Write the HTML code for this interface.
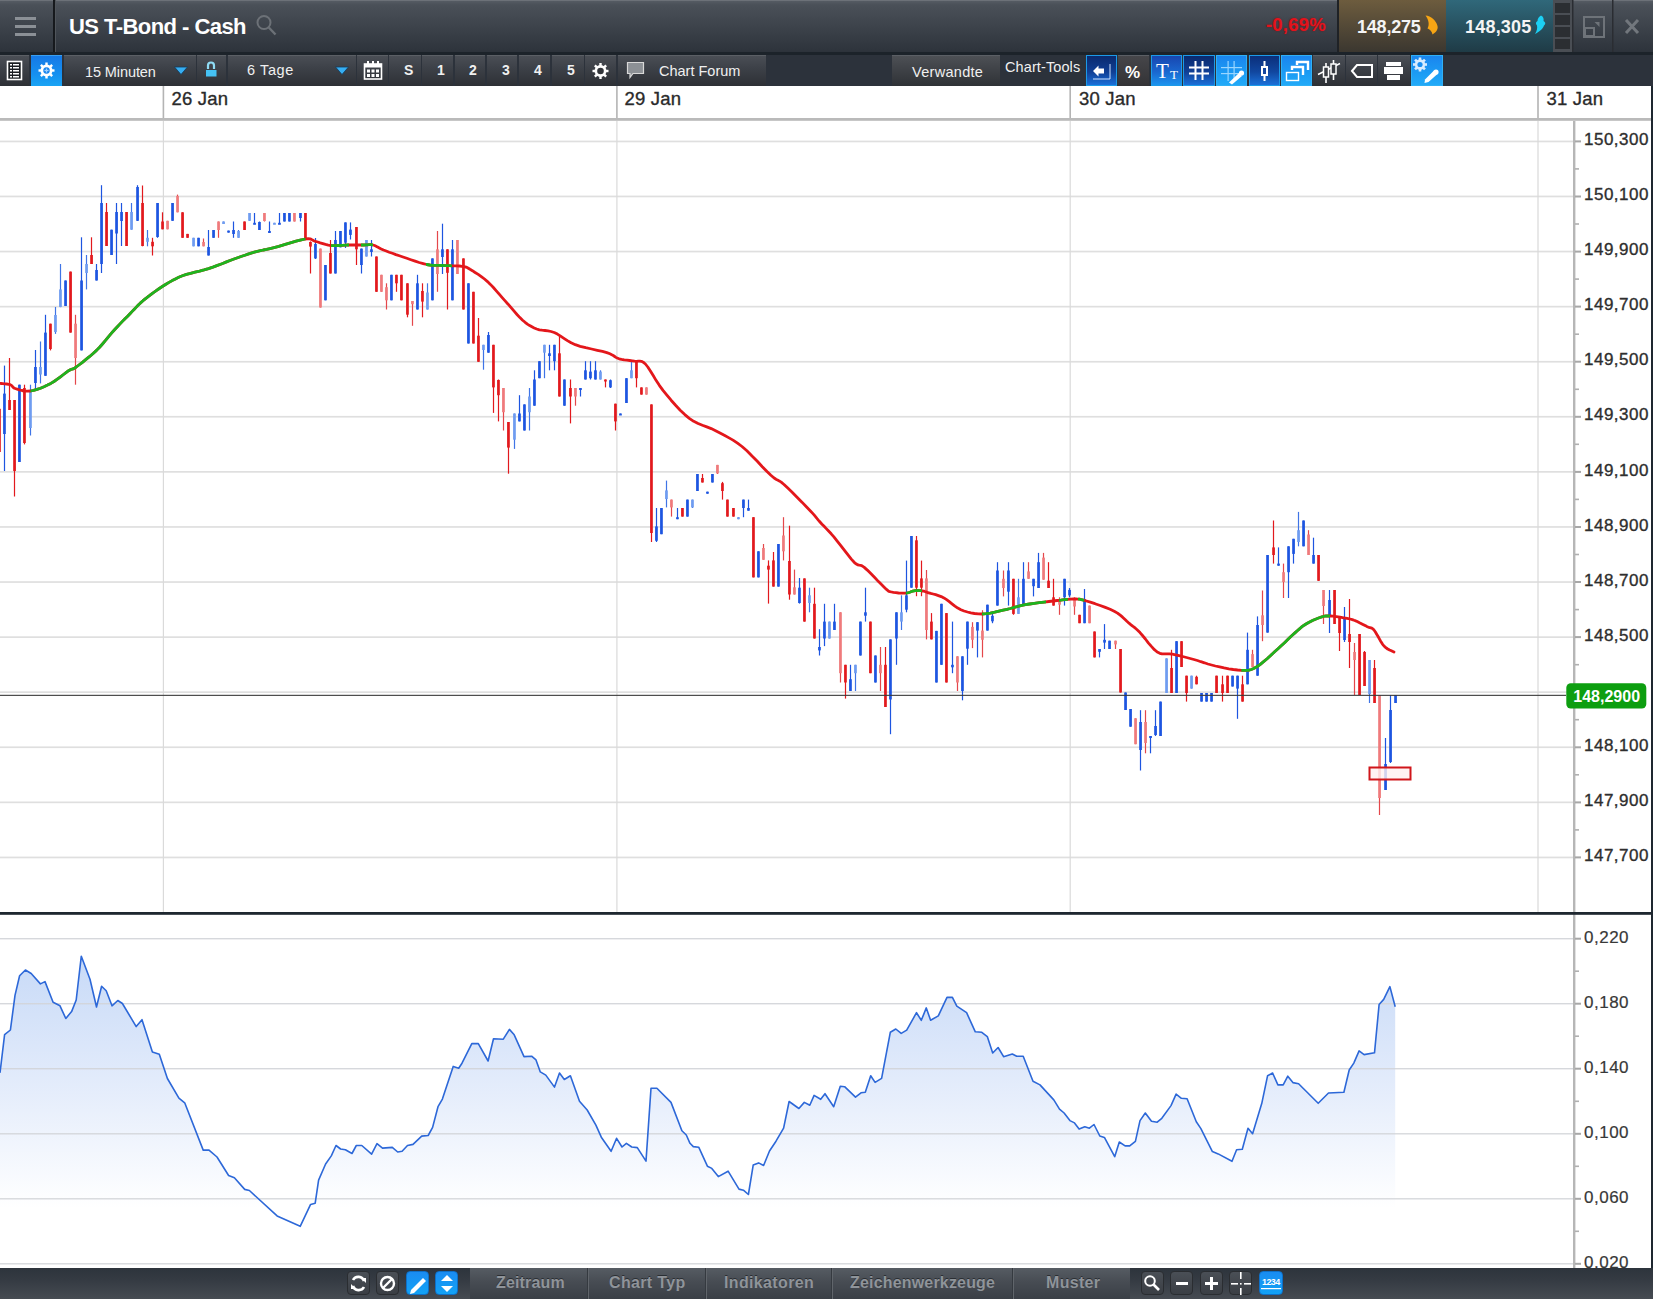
<!DOCTYPE html>
<html><head><meta charset="utf-8"><title>US T-Bond - Cash</title>
<style>
*{box-sizing:border-box}
html,body{margin:0;padding:0;width:1653px;height:1299px;overflow:hidden;background:#fff;font-family:"Liberation Sans",sans-serif}
.abs{position:absolute}
.chart{position:absolute;left:0;top:0}
.ax{font-family:"Liberation Sans",sans-serif;font-size:17px;fill:#2e2e2e;letter-spacing:0.5px;stroke:#2e2e2e;stroke-width:0.35px}
.ax2{font-family:"Liberation Sans",sans-serif;font-size:17px;fill:#383838;letter-spacing:0.5px;stroke:#383838;stroke-width:0.2px}
.dt{font-family:"Liberation Sans",sans-serif;font-size:18.5px;fill:#2a2a2a;letter-spacing:0.2px;stroke:#2a2a2a;stroke-width:0.35px}
.cp{font-family:"Liberation Sans",sans-serif;font-size:16px;font-weight:bold;fill:#fff}
#top{left:0;top:0;width:1653px;height:52px;background:linear-gradient(#555b63 0,#4a5058 8%,#3d434b 50%,#2d333b 100%);border-top:1px solid #6c7178}
#band{left:0;top:52px;width:1653px;height:3px;background:#1c232a}
#tb{left:0;top:55px;width:1653px;height:31px;background:#2c323b}
.btn{position:absolute;top:0;height:31px;background:linear-gradient(#4a4e55 0,#3d4148 40%,#2d3035 100%);border-top:1px solid #5b5f65;color:#f0f0f0;font-size:14px}
.blue{background:linear-gradient(#1679e6 0,#1590f0 60%,#1aa4f4 100%);border-top:1px solid #3aa0f0}
.navy{background:linear-gradient(#0a2a6e 0,#103f95 55%,#1a6fd8 100%);border:1px solid #1c9ae8}
.tblue{background:linear-gradient(#1846b0 0,#1a67cf 55%,#1c93ee 100%);border:1px solid #1c9ae8}
.bblue{background:linear-gradient(#1a85ee 0,#1c9cf4 60%,#22aaf8 100%);border:1px solid #30b0f5}
.sep{position:absolute;top:0;width:2px;height:31px;background:#1f2227}
.t{position:absolute;white-space:nowrap}
#bot{left:0;top:1268px;width:1653px;height:31px;background:linear-gradient(#2d343c 0,#353b43 40%,#464b52 100%)}
#tabs{position:absolute;left:470px;top:0;width:660px;height:31px;background:linear-gradient(#565c63 0,#474c53 45%,#3a3f46 100%)}
.tab{position:absolute;top:6px;font-size:16px;font-weight:bold;color:#8f949a;white-space:nowrap;text-shadow:0 -1px 0 #2a2e33}
.tsep{position:absolute;top:0;width:1px;height:31px;background:#353a40;box-shadow:1px 0 0 #60656b}
.ib{position:absolute;top:3px;width:23px;height:24px;border-radius:4px;background:linear-gradient(#4a4f56,#3a3e44);border:1px solid #2a2d31}
.ibb{background:linear-gradient(#1a8cf2,#12a2f5);border:1px solid #0e70c8}
</style></head>
<body>
<svg class="chart" width="1653" height="1299" viewBox="0 0 1653 1299" shape-rendering="auto"><rect x="0" y="140.6" width="1573" height="1.7" fill="#dfdfdf"/><rect x="0" y="195.6" width="1573" height="1.7" fill="#dfdfdf"/><rect x="0" y="250.7" width="1573" height="1.7" fill="#dfdfdf"/><rect x="0" y="305.8" width="1573" height="1.7" fill="#dfdfdf"/><rect x="0" y="360.9" width="1573" height="1.7" fill="#dfdfdf"/><rect x="0" y="415.9" width="1573" height="1.7" fill="#dfdfdf"/><rect x="0" y="471" width="1573" height="1.7" fill="#dfdfdf"/><rect x="0" y="526.1" width="1573" height="1.7" fill="#dfdfdf"/><rect x="0" y="581.2" width="1573" height="1.7" fill="#dfdfdf"/><rect x="0" y="636.3" width="1573" height="1.7" fill="#dfdfdf"/><rect x="0" y="691.3" width="1573" height="1.7" fill="#dfdfdf"/><rect x="0" y="746.4" width="1573" height="1.7" fill="#dfdfdf"/><rect x="0" y="801.5" width="1573" height="1.7" fill="#dfdfdf"/><rect x="0" y="856.6" width="1573" height="1.7" fill="#dfdfdf"/><rect x="162.8" y="121" width="1.2" height="791" fill="#dadada"/><rect x="162.6" y="86" width="1.6" height="32" fill="#b4b4b4"/><rect x="616.3" y="121" width="1.2" height="791" fill="#dadada"/><rect x="616.1" y="86" width="1.6" height="32" fill="#b4b4b4"/><rect x="1069.6" y="121" width="1.2" height="791" fill="#dadada"/><rect x="1069.4" y="86" width="1.6" height="32" fill="#b4b4b4"/><rect x="1537.4" y="121" width="1.2" height="791" fill="#dadada"/><rect x="1537.2" y="86" width="1.6" height="32" fill="#b4b4b4"/><defs><linearGradient id="ig" x1="0" y1="950" x2="0" y2="1208" gradientUnits="userSpaceOnUse"><stop offset="0" stop-color="#c6d9f7"/><stop offset="0.5" stop-color="#e2ebfb"/><stop offset="1" stop-color="#ffffff"/></linearGradient></defs><path d="M0,1268 L0,1072.8 L4.6,1034.7 L10.4,1030 L15,995.4 L19.6,975.8 L25.4,970 L31.2,973.5 L40.4,983.9 L45,981.6 L53.1,1002.3 L60,1005.8 L65.8,1018.5 L71.6,1011.6 L76.2,1000 L81.3,956.2 L90,979.3 L96.5,1007 L101.6,986.2 L106.2,990.8 L112,1005.8 L117.8,1000.5 L122.4,1003.5 L136.2,1026.6 L142,1019.7 L152.4,1052 L159.3,1054.3 L167.4,1078.5 L178.9,1098.2 L184.7,1102.8 L203.2,1150.1 L209,1150.1 L217,1157 L228.6,1175.5 L234.4,1177.8 L244.7,1189.4 L249.4,1190.5 L277.1,1215.9 L300.2,1226.3 L310.6,1204.4 L315.2,1203.2 L318.6,1180.1 L325.6,1164 L331.3,1155.9 L336,1145.5 L340.6,1149 L345.4,1149.8 L352,1153.5 L356.3,1145.5 L361.8,1145.5 L371.6,1154.2 L377,1143.7 L382.5,1148.1 L392.3,1147.4 L397.7,1152 L402.1,1151.3 L407.5,1145.5 L413,1144.4 L421.7,1136.1 L428.2,1135.5 L432.6,1127.4 L438,1106.7 L442.4,1099.1 L453.2,1066.4 L458.7,1068.2 L462,1063.2 L471.8,1043.6 L478.3,1043.6 L488.1,1061 L493.5,1038.8 L503.3,1039.2 L509.4,1029.4 L514.2,1034.8 L524,1056.6 L531.6,1056.2 L536,1059.9 L540.3,1071.9 L545.8,1075.1 L554.5,1087.1 L559.5,1073 L564.3,1079.5 L570.4,1075.8 L579.5,1101.3 L587.2,1110 L595.9,1125.2 L601.3,1137.2 L611.1,1151.3 L616.6,1138.3 L622,1147 L626.4,1143.3 L631.8,1147 L637.3,1147.6 L646,1161.1 L651,1088.2 L656.9,1088.2 L671,1102.4 L681.9,1130.7 L686.3,1135 L690,1143.3 L693.3,1146.6 L698.7,1147.2 L707.4,1166.2 L711.8,1168.4 L718.3,1176.6 L728.1,1171.2 L739,1189.1 L743.4,1190.2 L748.4,1194.5 L753.2,1165.1 L758.6,1162.9 L763.6,1165.5 L769.5,1151 L776,1141.2 L783.6,1128.1 L789.1,1101.5 L798.9,1108.5 L804.3,1102.4 L809.8,1105.2 L814.1,1095.4 L820.7,1099.3 L825,1093.7 L833.7,1106.7 L840.3,1086.3 L844.6,1086.7 L855.5,1097.2 L861,1092.8 L865.3,1092.2 L870.7,1075.8 L875.1,1082.4 L881.6,1078.4 L890.3,1032.3 L895.8,1029 L901.2,1033.4 L906.7,1030.1 L916.5,1012.7 L921.3,1020.3 L926.3,1007.9 L930.6,1020.3 L938.3,1015.9 L947,997.4 L952.4,997.4 L956.8,1006.1 L966.6,1012.7 L975.3,1031.8 L981.8,1032.3 L987.3,1036.6 L992.7,1053 L998.1,1047.5 L1003.6,1056.7 L1012.3,1054 L1016.7,1056.2 L1023.2,1056.2 L1033,1081.3 L1040,1084.9 L1053.8,1099.9 L1059.5,1109.1 L1064.1,1113 L1069.9,1120.6 L1074.5,1122.9 L1079.1,1129.1 L1084.8,1126.8 L1089.4,1128.2 L1094,1124.5 L1099.8,1136 L1104.4,1137.4 L1114.7,1156.7 L1119.3,1142 L1125.1,1145.9 L1129.7,1145.9 L1135.4,1141.3 L1140,1120.6 L1145.3,1113 L1151.5,1121.3 L1157.2,1122.2 L1161.8,1118.3 L1171,1105.6 L1176.1,1094.1 L1181.4,1098.3 L1187.1,1098.7 L1196.3,1121.7 L1200.9,1128.6 L1212.4,1151.6 L1218.2,1153.9 L1232,1161.3 L1236.6,1149.8 L1242.3,1149.3 L1248,1128.2 L1252.6,1133.7 L1261.8,1103.3 L1267.6,1075.7 L1272.6,1073 L1277.9,1084.9 L1283.2,1084.9 L1287.8,1076.2 L1292.9,1082.6 L1298.6,1083.8 L1318.2,1103.3 L1328.5,1093 L1343.9,1092.3 L1349.2,1070 L1353.8,1063.1 L1359.1,1050.9 L1364.1,1054.6 L1374.5,1052.8 L1379.1,1004.5 L1383.7,999.4 L1389.9,986.6 L1395.2,1006.8 L1395.2,1268 Z" fill="url(#ig)"/><rect x="0" y="938" width="1573" height="1.4" fill="#d2d4d8" fill-opacity="0.9"/><rect x="0" y="1003" width="1573" height="1.4" fill="#d2d4d8" fill-opacity="0.9"/><rect x="0" y="1068" width="1573" height="1.4" fill="#d2d4d8" fill-opacity="0.9"/><rect x="0" y="1133.1" width="1573" height="1.4" fill="#d2d4d8" fill-opacity="0.9"/><rect x="0" y="1198.1" width="1573" height="1.4" fill="#d2d4d8" fill-opacity="0.9"/><rect x="0" y="1263.1" width="1573" height="1.4" fill="#d2d4d8" fill-opacity="0.9"/><polyline points="0,1072.8 4.6,1034.7 10.4,1030 15,995.4 19.6,975.8 25.4,970 31.2,973.5 40.4,983.9 45,981.6 53.1,1002.3 60,1005.8 65.8,1018.5 71.6,1011.6 76.2,1000 81.3,956.2 90,979.3 96.5,1007 101.6,986.2 106.2,990.8 112,1005.8 117.8,1000.5 122.4,1003.5 136.2,1026.6 142,1019.7 152.4,1052 159.3,1054.3 167.4,1078.5 178.9,1098.2 184.7,1102.8 203.2,1150.1 209,1150.1 217,1157 228.6,1175.5 234.4,1177.8 244.7,1189.4 249.4,1190.5 277.1,1215.9 300.2,1226.3 310.6,1204.4 315.2,1203.2 318.6,1180.1 325.6,1164 331.3,1155.9 336,1145.5 340.6,1149 345.4,1149.8 352,1153.5 356.3,1145.5 361.8,1145.5 371.6,1154.2 377,1143.7 382.5,1148.1 392.3,1147.4 397.7,1152 402.1,1151.3 407.5,1145.5 413,1144.4 421.7,1136.1 428.2,1135.5 432.6,1127.4 438,1106.7 442.4,1099.1 453.2,1066.4 458.7,1068.2 462,1063.2 471.8,1043.6 478.3,1043.6 488.1,1061 493.5,1038.8 503.3,1039.2 509.4,1029.4 514.2,1034.8 524,1056.6 531.6,1056.2 536,1059.9 540.3,1071.9 545.8,1075.1 554.5,1087.1 559.5,1073 564.3,1079.5 570.4,1075.8 579.5,1101.3 587.2,1110 595.9,1125.2 601.3,1137.2 611.1,1151.3 616.6,1138.3 622,1147 626.4,1143.3 631.8,1147 637.3,1147.6 646,1161.1 651,1088.2 656.9,1088.2 671,1102.4 681.9,1130.7 686.3,1135 690,1143.3 693.3,1146.6 698.7,1147.2 707.4,1166.2 711.8,1168.4 718.3,1176.6 728.1,1171.2 739,1189.1 743.4,1190.2 748.4,1194.5 753.2,1165.1 758.6,1162.9 763.6,1165.5 769.5,1151 776,1141.2 783.6,1128.1 789.1,1101.5 798.9,1108.5 804.3,1102.4 809.8,1105.2 814.1,1095.4 820.7,1099.3 825,1093.7 833.7,1106.7 840.3,1086.3 844.6,1086.7 855.5,1097.2 861,1092.8 865.3,1092.2 870.7,1075.8 875.1,1082.4 881.6,1078.4 890.3,1032.3 895.8,1029 901.2,1033.4 906.7,1030.1 916.5,1012.7 921.3,1020.3 926.3,1007.9 930.6,1020.3 938.3,1015.9 947,997.4 952.4,997.4 956.8,1006.1 966.6,1012.7 975.3,1031.8 981.8,1032.3 987.3,1036.6 992.7,1053 998.1,1047.5 1003.6,1056.7 1012.3,1054 1016.7,1056.2 1023.2,1056.2 1033,1081.3 1040,1084.9 1053.8,1099.9 1059.5,1109.1 1064.1,1113 1069.9,1120.6 1074.5,1122.9 1079.1,1129.1 1084.8,1126.8 1089.4,1128.2 1094,1124.5 1099.8,1136 1104.4,1137.4 1114.7,1156.7 1119.3,1142 1125.1,1145.9 1129.7,1145.9 1135.4,1141.3 1140,1120.6 1145.3,1113 1151.5,1121.3 1157.2,1122.2 1161.8,1118.3 1171,1105.6 1176.1,1094.1 1181.4,1098.3 1187.1,1098.7 1196.3,1121.7 1200.9,1128.6 1212.4,1151.6 1218.2,1153.9 1232,1161.3 1236.6,1149.8 1242.3,1149.3 1248,1128.2 1252.6,1133.7 1261.8,1103.3 1267.6,1075.7 1272.6,1073 1277.9,1084.9 1283.2,1084.9 1287.8,1076.2 1292.9,1082.6 1298.6,1083.8 1318.2,1103.3 1328.5,1093 1343.9,1092.3 1349.2,1070 1353.8,1063.1 1359.1,1050.9 1364.1,1054.6 1374.5,1052.8 1379.1,1004.5 1383.7,999.4 1389.9,986.6 1395.2,1006.8" fill="none" stroke="#2d68d8" stroke-width="1.6" stroke-linejoin="round"/><rect x="-1.1" y="408.8" width="1.2" height="43.2" fill="#e2191d"/><rect x="-1.9" y="408.8" width="2.7" height="43.2" fill="#e2191d"/><rect x="3.9" y="365.6" width="1.2" height="105.4" fill="#1d55e0"/><rect x="3.1" y="393.6" width="2.7" height="40.4" fill="#1d55e0"/><rect x="8.9" y="358" width="1.2" height="52" fill="#e2191d"/><rect x="8.2" y="400" width="2.7" height="10" fill="#e2191d"/><rect x="13.9" y="400" width="1.2" height="96.5" fill="#e2191d"/><rect x="13.2" y="400" width="2.7" height="71" fill="#e2191d"/><rect x="18.9" y="384.7" width="1.2" height="77.3" fill="#1d55e0"/><rect x="18.1" y="384.7" width="2.7" height="77.3" fill="#1d55e0"/><rect x="23.9" y="384.7" width="1.2" height="59.7" fill="#e2191d"/><rect x="23.1" y="388" width="2.7" height="55" fill="#e2191d"/><rect x="29.9" y="384.7" width="1.2" height="50.8" fill="#3f74e6"/><rect x="29.1" y="391" width="2.7" height="37" fill="#6f9cf0"/><rect x="34.9" y="350" width="1.2" height="41" fill="#1d55e0"/><rect x="34.1" y="367" width="2.7" height="16" fill="#1d55e0"/><rect x="39.9" y="341.5" width="1.2" height="41.9" fill="#3f74e6"/><rect x="39.1" y="367" width="2.7" height="7.5" fill="#6f9cf0"/><rect x="44.9" y="314.8" width="1.2" height="61" fill="#1d55e0"/><rect x="44.1" y="332.6" width="2.7" height="43.2" fill="#1d55e0"/><rect x="49.9" y="323.7" width="1.2" height="26.7" fill="#e2191d"/><rect x="49.1" y="323.7" width="2.7" height="25.3" fill="#e2191d"/><rect x="54.9" y="307" width="1.2" height="26.9" fill="#3f74e6"/><rect x="54.1" y="315" width="2.7" height="17" fill="#6f9cf0"/><rect x="59.9" y="264" width="1.2" height="43.2" fill="#3f74e6"/><rect x="59.1" y="289.4" width="2.7" height="17.6" fill="#6f9cf0"/><rect x="64.9" y="280.5" width="1.2" height="25.5" fill="#1d55e0"/><rect x="64.2" y="280.5" width="2.7" height="25.5" fill="#1d55e0"/><rect x="69.9" y="271.6" width="1.2" height="61" fill="#e2191d"/><rect x="69.2" y="271.6" width="2.7" height="61" fill="#e2191d"/><rect x="74.9" y="314.8" width="1.2" height="69.9" fill="#e4474b"/><rect x="74.2" y="323.7" width="2.7" height="34.3" fill="#ef7a7c"/><rect x="80.9" y="237.3" width="1.2" height="113.1" fill="#1d55e0"/><rect x="80.2" y="280.5" width="2.7" height="69.9" fill="#1d55e0"/><rect x="85.9" y="255" width="1.2" height="34.4" fill="#3f74e6"/><rect x="85.2" y="264" width="2.7" height="9" fill="#6f9cf0"/><rect x="90.9" y="237.3" width="1.2" height="26.7" fill="#e2191d"/><rect x="90.2" y="255" width="2.7" height="9" fill="#e2191d"/><rect x="95.9" y="264" width="1.2" height="16.5" fill="#1d55e0"/><rect x="95.2" y="270" width="2.7" height="10.5" fill="#1d55e0"/><rect x="100.9" y="185.2" width="1.2" height="87.8" fill="#1d55e0"/><rect x="100.2" y="203" width="2.7" height="61" fill="#1d55e0"/><rect x="105.9" y="203" width="1.2" height="43" fill="#e2191d"/><rect x="105.2" y="212" width="2.7" height="34" fill="#e2191d"/><rect x="110.9" y="229.7" width="1.2" height="25.3" fill="#1d55e0"/><rect x="110.2" y="229.7" width="2.7" height="25.3" fill="#1d55e0"/><rect x="115.9" y="203" width="1.2" height="61" fill="#1d55e0"/><rect x="115.2" y="212" width="2.7" height="21.5" fill="#1d55e0"/><rect x="120.9" y="203" width="1.2" height="43" fill="#1d55e0"/><rect x="120.2" y="212" width="2.7" height="9" fill="#1d55e0"/><rect x="125.9" y="212" width="1.2" height="34" fill="#e2191d"/><rect x="125.2" y="212" width="2.7" height="34" fill="#e2191d"/><rect x="130.9" y="203" width="1.2" height="26.7" fill="#3f74e6"/><rect x="130.2" y="212" width="2.7" height="17.7" fill="#6f9cf0"/><rect x="136.9" y="185.2" width="1.2" height="35.8" fill="#1d55e0"/><rect x="136.2" y="187" width="2.7" height="33.8" fill="#1d55e0"/><rect x="141.9" y="185.5" width="1.2" height="60.8" fill="#e2191d"/><rect x="141.2" y="203" width="2.7" height="43" fill="#e2191d"/><rect x="146.9" y="230" width="1.2" height="16.3" fill="#3f74e6"/><rect x="146.2" y="237.8" width="2.7" height="4" fill="#6f9cf0"/><rect x="151.9" y="237.8" width="1.2" height="17.7" fill="#e2191d"/><rect x="151.2" y="241.8" width="2.7" height="4.5" fill="#e2191d"/><rect x="156.9" y="203" width="1.2" height="34.8" fill="#1d55e0"/><rect x="156.2" y="203" width="2.7" height="34" fill="#1d55e0"/><rect x="161.9" y="212.3" width="1.2" height="17" fill="#e2191d"/><rect x="161.2" y="221.5" width="2.7" height="7.8" fill="#e2191d"/><rect x="166.9" y="220.8" width="1.2" height="8.5" fill="#e4474b"/><rect x="166.2" y="220.8" width="2.7" height="8.5" fill="#ef7a7c"/><rect x="171.9" y="203" width="1.2" height="17.8" fill="#1d55e0"/><rect x="171.2" y="203" width="2.7" height="17.8" fill="#1d55e0"/><rect x="176.9" y="194.6" width="1.2" height="17.7" fill="#e4474b"/><rect x="176.2" y="196" width="2.7" height="16.3" fill="#ef7a7c"/><rect x="181.9" y="212.3" width="1.2" height="25.5" fill="#e2191d"/><rect x="181.2" y="212.3" width="2.7" height="25.5" fill="#e2191d"/><rect x="186.9" y="233.9" width="1.2" height="3.9" fill="#e2191d"/><rect x="186.2" y="233.9" width="2.7" height="3.9" fill="#e2191d"/><rect x="192.9" y="237.8" width="1.2" height="8.5" fill="#3f74e6"/><rect x="192.2" y="237.8" width="2.7" height="8.5" fill="#6f9cf0"/><rect x="197.9" y="237.8" width="1.2" height="8.5" fill="#1d55e0"/><rect x="197.2" y="237.8" width="2.7" height="8.5" fill="#1d55e0"/><rect x="202.9" y="238.5" width="1.2" height="7.8" fill="#e4474b"/><rect x="202.2" y="242" width="2.7" height="4.3" fill="#ef7a7c"/><rect x="207.9" y="230" width="1.2" height="25.5" fill="#1d55e0"/><rect x="207.2" y="247" width="2.7" height="8.5" fill="#1d55e0"/><rect x="212.9" y="230" width="1.2" height="7.8" fill="#1d55e0"/><rect x="212.2" y="230" width="2.7" height="7.8" fill="#1d55e0"/><rect x="217.9" y="221.5" width="1.2" height="16.3" fill="#e4474b"/><rect x="217.2" y="221.5" width="2.7" height="8.5" fill="#ef7a7c"/><rect x="222.9" y="221.5" width="1.2" height="2.5" fill="#3f74e6"/><rect x="222.2" y="221.5" width="2.7" height="2.5" fill="#6f9cf0"/><rect x="227.9" y="230.6" width="1.2" height="2" fill="#1d55e0"/><rect x="227.2" y="230.6" width="2.7" height="2" fill="#1d55e0"/><rect x="232.9" y="221.5" width="1.2" height="16.3" fill="#1d55e0"/><rect x="232.2" y="230" width="2.7" height="4" fill="#1d55e0"/><rect x="237.9" y="230" width="1.2" height="7.8" fill="#3f74e6"/><rect x="237.2" y="231" width="2.7" height="6.8" fill="#6f9cf0"/><rect x="243.9" y="221.5" width="1.2" height="8.5" fill="#e2191d"/><rect x="243.2" y="221.5" width="2.7" height="8.5" fill="#e2191d"/><rect x="248.9" y="213" width="1.2" height="7.8" fill="#3f74e6"/><rect x="248.2" y="213" width="2.7" height="7.8" fill="#6f9cf0"/><rect x="253.9" y="213" width="1.2" height="11" fill="#1d55e0"/><rect x="253.2" y="222.8" width="2.7" height="2" fill="#1d55e0"/><rect x="258.9" y="221.5" width="1.2" height="8.5" fill="#1d55e0"/><rect x="258.1" y="222" width="2.7" height="8" fill="#1d55e0"/><rect x="263.9" y="213" width="1.2" height="8.5" fill="#e4474b"/><rect x="263.1" y="213" width="2.7" height="8" fill="#ef7a7c"/><rect x="268.9" y="221.5" width="1.2" height="11.1" fill="#1d55e0"/><rect x="268.1" y="231" width="2.7" height="2" fill="#1d55e0"/><rect x="273.9" y="222.8" width="1.2" height="1.2" fill="#3f74e6"/><rect x="273.1" y="222.8" width="2.7" height="2" fill="#6f9cf0"/><rect x="278.9" y="213" width="1.2" height="11" fill="#1d55e0"/><rect x="278.1" y="222.8" width="2.7" height="2" fill="#1d55e0"/><rect x="283.9" y="213" width="1.2" height="8.5" fill="#1d55e0"/><rect x="283.1" y="213" width="2.7" height="8.5" fill="#1d55e0"/><rect x="288.9" y="213" width="1.2" height="8.5" fill="#1d55e0"/><rect x="288.1" y="213" width="2.7" height="8.5" fill="#1d55e0"/><rect x="293.9" y="213" width="1.2" height="8.5" fill="#e4474b"/><rect x="293.1" y="213" width="2.7" height="8.5" fill="#ef7a7c"/><rect x="299.9" y="213" width="1.2" height="8.5" fill="#1d55e0"/><rect x="299.1" y="213" width="2.7" height="5" fill="#1d55e0"/><rect x="304.9" y="213" width="1.2" height="27" fill="#e2191d"/><rect x="304.1" y="213" width="2.7" height="27" fill="#e2191d"/><rect x="309.9" y="241.4" width="1.2" height="32.1" fill="#e2191d"/><rect x="309.1" y="242" width="2.7" height="4.6" fill="#e2191d"/><rect x="314.9" y="238" width="1.2" height="21" fill="#1d55e0"/><rect x="314.1" y="244" width="2.7" height="14.4" fill="#1d55e0"/><rect x="319.9" y="248.6" width="1.2" height="58.9" fill="#e4474b"/><rect x="319.1" y="248.6" width="2.7" height="58.9" fill="#ef7a7c"/><rect x="324.9" y="265" width="1.2" height="35.3" fill="#1d55e0"/><rect x="324.1" y="265" width="2.7" height="35.3" fill="#1d55e0"/><rect x="329.9" y="240" width="1.2" height="33.5" fill="#e2191d"/><rect x="329.1" y="253" width="2.7" height="20.5" fill="#e2191d"/><rect x="334.9" y="231" width="1.2" height="42.5" fill="#1d55e0"/><rect x="334.1" y="240" width="2.7" height="33.5" fill="#1d55e0"/><rect x="339.9" y="231" width="1.2" height="16.3" fill="#1d55e0"/><rect x="339.1" y="231" width="2.7" height="16.3" fill="#1d55e0"/><rect x="344.9" y="222.4" width="1.2" height="25.6" fill="#1d55e0"/><rect x="344.1" y="222.4" width="2.7" height="20.3" fill="#1d55e0"/><rect x="349.9" y="222.4" width="1.2" height="17.1" fill="#1d55e0"/><rect x="349.1" y="229.6" width="2.7" height="5.3" fill="#1d55e0"/><rect x="355.9" y="227" width="1.2" height="38" fill="#e2191d"/><rect x="355.1" y="227" width="2.7" height="22.3" fill="#e2191d"/><rect x="360.9" y="248.6" width="1.2" height="24.9" fill="#1d55e0"/><rect x="360.1" y="248.6" width="2.7" height="16.4" fill="#1d55e0"/><rect x="365.9" y="240" width="1.2" height="16.5" fill="#3f74e6"/><rect x="365.1" y="240" width="2.7" height="16.5" fill="#6f9cf0"/><rect x="370.9" y="240" width="1.2" height="16.5" fill="#1d55e0"/><rect x="370.1" y="249.3" width="2.7" height="2.7" fill="#1d55e0"/><rect x="375.9" y="256.5" width="1.2" height="35.3" fill="#e2191d"/><rect x="375.1" y="256.5" width="2.7" height="35.3" fill="#e2191d"/><rect x="380.9" y="274.8" width="1.2" height="17" fill="#e4474b"/><rect x="380.1" y="274.8" width="2.7" height="17" fill="#ef7a7c"/><rect x="385.9" y="283.3" width="1.2" height="26.2" fill="#e4474b"/><rect x="385.1" y="287.2" width="2.7" height="13.1" fill="#ef7a7c"/><rect x="390.9" y="274.8" width="1.2" height="25.5" fill="#1d55e0"/><rect x="390.1" y="274.8" width="2.7" height="25.5" fill="#1d55e0"/><rect x="395.9" y="274.8" width="1.2" height="17" fill="#e2191d"/><rect x="395.1" y="274.8" width="2.7" height="8.5" fill="#e2191d"/><rect x="400.9" y="274.8" width="1.2" height="25.5" fill="#e2191d"/><rect x="400.1" y="274.8" width="2.7" height="25.5" fill="#e2191d"/><rect x="406.9" y="283.3" width="1.2" height="34" fill="#e2191d"/><rect x="406.1" y="283.3" width="2.7" height="31.4" fill="#e2191d"/><rect x="411.9" y="301" width="1.2" height="24.8" fill="#e4474b"/><rect x="411.1" y="301" width="2.7" height="3.2" fill="#ef7a7c"/><rect x="416.9" y="274.8" width="1.2" height="34.7" fill="#1d55e0"/><rect x="416.1" y="283.3" width="2.7" height="26.2" fill="#1d55e0"/><rect x="421.9" y="283.3" width="1.2" height="34" fill="#e2191d"/><rect x="421.1" y="291" width="2.7" height="10.6" fill="#e2191d"/><rect x="426.9" y="283.3" width="1.2" height="26.2" fill="#3f74e6"/><rect x="426.1" y="292.5" width="2.7" height="17" fill="#6f9cf0"/><rect x="431.9" y="258.4" width="1.2" height="41.9" fill="#1d55e0"/><rect x="431.1" y="258.4" width="2.7" height="41.9" fill="#1d55e0"/><rect x="436.9" y="231" width="1.2" height="60.8" fill="#e4474b"/><rect x="436.1" y="249.3" width="2.7" height="24.7" fill="#ef7a7c"/><rect x="441.9" y="223.7" width="1.2" height="50.3" fill="#1d55e0"/><rect x="441.1" y="249.3" width="2.7" height="7.7" fill="#1d55e0"/><rect x="446.9" y="249.3" width="1.2" height="60.2" fill="#e2191d"/><rect x="446.1" y="249.3" width="2.7" height="23.5" fill="#e2191d"/><rect x="451.9" y="240" width="1.2" height="60.3" fill="#1d55e0"/><rect x="451.1" y="249.3" width="2.7" height="51" fill="#1d55e0"/><rect x="456.9" y="240" width="1.2" height="34" fill="#e4474b"/><rect x="456.1" y="240" width="2.7" height="34" fill="#ef7a7c"/><rect x="462.9" y="258.4" width="1.2" height="51.1" fill="#e2191d"/><rect x="462.1" y="258.4" width="2.7" height="51.1" fill="#e2191d"/><rect x="467.9" y="283.3" width="1.2" height="60.2" fill="#1d55e0"/><rect x="467.1" y="283.3" width="2.7" height="60.2" fill="#1d55e0"/><rect x="472.9" y="291.8" width="1.2" height="51.7" fill="#e2191d"/><rect x="472.1" y="291.8" width="2.7" height="51.7" fill="#e2191d"/><rect x="477.9" y="318" width="1.2" height="43.8" fill="#e2191d"/><rect x="477.1" y="335.7" width="2.7" height="26.1" fill="#e2191d"/><rect x="482.9" y="344.8" width="1.2" height="24.9" fill="#3f74e6"/><rect x="482.1" y="344.8" width="2.7" height="5.2" fill="#6f9cf0"/><rect x="487.9" y="332" width="1.2" height="20.7" fill="#1d55e0"/><rect x="487.1" y="335" width="2.7" height="17.7" fill="#1d55e0"/><rect x="492.9" y="344.8" width="1.2" height="68.1" fill="#e2191d"/><rect x="492.1" y="344.8" width="2.7" height="42.6" fill="#e2191d"/><rect x="497.9" y="379.5" width="1.2" height="41.9" fill="#e2191d"/><rect x="497.1" y="380" width="2.7" height="15.2" fill="#e2191d"/><rect x="502.9" y="388" width="1.2" height="42.5" fill="#e4474b"/><rect x="502.1" y="388" width="2.7" height="24.2" fill="#ef7a7c"/><rect x="507.9" y="422" width="1.2" height="51.7" fill="#e2191d"/><rect x="507.1" y="422" width="2.7" height="25.6" fill="#e2191d"/><rect x="513.9" y="413.5" width="1.2" height="35.4" fill="#3f74e6"/><rect x="513.1" y="413.5" width="2.7" height="26.2" fill="#6f9cf0"/><rect x="518.9" y="395.2" width="1.2" height="26.2" fill="#1d55e0"/><rect x="518.1" y="413.5" width="2.7" height="7.9" fill="#1d55e0"/><rect x="523.9" y="404.4" width="1.2" height="26.1" fill="#1d55e0"/><rect x="523.1" y="404.4" width="2.7" height="26.1" fill="#1d55e0"/><rect x="528.9" y="388" width="1.2" height="42.5" fill="#3f74e6"/><rect x="528.1" y="396.5" width="2.7" height="15.7" fill="#6f9cf0"/><rect x="533.9" y="370.3" width="1.2" height="35.4" fill="#1d55e0"/><rect x="533.1" y="379.5" width="2.7" height="26.2" fill="#1d55e0"/><rect x="538.9" y="361.2" width="1.2" height="17" fill="#1d55e0"/><rect x="538.1" y="361.2" width="2.7" height="17" fill="#1d55e0"/><rect x="543.9" y="344.8" width="1.2" height="33.4" fill="#3f74e6"/><rect x="543.1" y="344.8" width="2.7" height="7.9" fill="#6f9cf0"/><rect x="548.9" y="344.8" width="1.2" height="25.5" fill="#1d55e0"/><rect x="548.1" y="353.3" width="2.7" height="2.7" fill="#1d55e0"/><rect x="553.9" y="344.8" width="1.2" height="25.5" fill="#1d55e0"/><rect x="553.1" y="344.8" width="2.7" height="16.4" fill="#1d55e0"/><rect x="558.9" y="335" width="1.2" height="61.5" fill="#e2191d"/><rect x="558.1" y="353.3" width="2.7" height="43.2" fill="#e2191d"/><rect x="563.9" y="379.5" width="1.2" height="26.2" fill="#1d55e0"/><rect x="563.1" y="379.5" width="2.7" height="26.2" fill="#1d55e0"/><rect x="569.9" y="379.5" width="1.2" height="43.9" fill="#e2191d"/><rect x="569.1" y="388" width="2.7" height="8.5" fill="#e2191d"/><rect x="574.9" y="388" width="1.2" height="17.7" fill="#e4474b"/><rect x="574.1" y="388" width="2.7" height="8.5" fill="#ef7a7c"/><rect x="579.9" y="388" width="1.2" height="8.5" fill="#1d55e0"/><rect x="579.1" y="388" width="2.7" height="2" fill="#1d55e0"/><rect x="584.9" y="361.2" width="1.2" height="18.3" fill="#1d55e0"/><rect x="584.1" y="370.3" width="2.7" height="9.2" fill="#1d55e0"/><rect x="589.9" y="361.2" width="1.2" height="18.3" fill="#1d55e0"/><rect x="589.1" y="371.6" width="2.7" height="6.6" fill="#1d55e0"/><rect x="594.9" y="361.2" width="1.2" height="18.3" fill="#1d55e0"/><rect x="594.1" y="370.3" width="2.7" height="9.2" fill="#1d55e0"/><rect x="599.9" y="370.3" width="1.2" height="9.2" fill="#3f74e6"/><rect x="599.1" y="371.6" width="2.7" height="7.9" fill="#6f9cf0"/><rect x="604.9" y="379.5" width="1.2" height="7.9" fill="#e2191d"/><rect x="604.1" y="379.5" width="2.7" height="2" fill="#e2191d"/><rect x="609.9" y="379.5" width="1.2" height="8.5" fill="#1d55e0"/><rect x="609.1" y="380.2" width="2.7" height="7.2" fill="#1d55e0"/><rect x="614.9" y="403.7" width="1.2" height="26.8" fill="#e2191d"/><rect x="614.1" y="403.7" width="2.7" height="17.7" fill="#e2191d"/><rect x="619.9" y="413.5" width="1.2" height="1.3" fill="#1d55e0"/><rect x="619.1" y="413.5" width="2.7" height="2" fill="#1d55e0"/><rect x="625.9" y="378.2" width="1.2" height="24.8" fill="#1d55e0"/><rect x="625.1" y="378.2" width="2.7" height="24.8" fill="#1d55e0"/><rect x="630.9" y="361.2" width="1.2" height="17" fill="#3f74e6"/><rect x="630.1" y="370.3" width="2.7" height="7.9" fill="#6f9cf0"/><rect x="635.9" y="361.2" width="1.2" height="26.2" fill="#e2191d"/><rect x="635.1" y="361.2" width="2.7" height="17" fill="#e2191d"/><rect x="640.9" y="387.4" width="1.2" height="7.2" fill="#e2191d"/><rect x="640.1" y="387.4" width="2.7" height="7.2" fill="#e2191d"/><rect x="645.9" y="387.4" width="1.2" height="7.2" fill="#e4474b"/><rect x="645.1" y="387.4" width="2.7" height="7.2" fill="#ef7a7c"/><rect x="650.9" y="404.4" width="1.2" height="137.6" fill="#e2191d"/><rect x="650.1" y="404.4" width="2.7" height="128.6" fill="#e2191d"/><rect x="655.9" y="508" width="1.2" height="34" fill="#1d55e0"/><rect x="655.1" y="526.4" width="2.7" height="14.4" fill="#1d55e0"/><rect x="660.9" y="508" width="1.2" height="26.2" fill="#1d55e0"/><rect x="660.1" y="508" width="2.7" height="26.2" fill="#1d55e0"/><rect x="665.9" y="480.6" width="1.2" height="26.8" fill="#3f74e6"/><rect x="665.1" y="490.4" width="2.7" height="8.6" fill="#6f9cf0"/><rect x="670.9" y="499.6" width="1.2" height="17" fill="#e4474b"/><rect x="670.1" y="499.6" width="2.7" height="7.8" fill="#ef7a7c"/><rect x="676.9" y="508" width="1.2" height="11.2" fill="#1d55e0"/><rect x="676.1" y="517.2" width="2.7" height="2" fill="#1d55e0"/><rect x="681.9" y="508" width="1.2" height="8.6" fill="#e2191d"/><rect x="681.1" y="508" width="2.7" height="8.6" fill="#e2191d"/><rect x="686.9" y="499.6" width="1.2" height="17" fill="#1d55e0"/><rect x="686.1" y="499.6" width="2.7" height="17" fill="#1d55e0"/><rect x="691.9" y="499.6" width="1.2" height="8.4" fill="#3f74e6"/><rect x="691.1" y="499.6" width="2.7" height="7.8" fill="#6f9cf0"/><rect x="696.9" y="474" width="1.2" height="17" fill="#1d55e0"/><rect x="696.1" y="474" width="2.7" height="17" fill="#1d55e0"/><rect x="701.9" y="474" width="1.2" height="8.5" fill="#e2191d"/><rect x="701.1" y="478" width="2.7" height="4.5" fill="#e2191d"/><rect x="706.9" y="491.7" width="1.2" height="2" fill="#1d55e0"/><rect x="706.1" y="491.7" width="2.7" height="2" fill="#1d55e0"/><rect x="711.9" y="474" width="1.2" height="8.5" fill="#1d55e0"/><rect x="711.1" y="474" width="2.7" height="8.5" fill="#1d55e0"/><rect x="716.9" y="464.9" width="1.2" height="9.1" fill="#e4474b"/><rect x="716.1" y="464.9" width="2.7" height="8.5" fill="#ef7a7c"/><rect x="721.9" y="481.9" width="1.2" height="17.7" fill="#e2191d"/><rect x="721.1" y="483.2" width="2.7" height="7.8" fill="#e2191d"/><rect x="726.9" y="499.6" width="1.2" height="17" fill="#e2191d"/><rect x="726.1" y="499.6" width="2.7" height="17" fill="#e2191d"/><rect x="732.9" y="508" width="1.2" height="8.6" fill="#e2191d"/><rect x="732.1" y="508" width="2.7" height="8.6" fill="#e2191d"/><rect x="737.9" y="517.2" width="1.2" height="2" fill="#3f74e6"/><rect x="737.1" y="517.2" width="2.7" height="2" fill="#6f9cf0"/><rect x="742.9" y="499.6" width="1.2" height="17.6" fill="#1d55e0"/><rect x="742.1" y="499.6" width="2.7" height="8.4" fill="#1d55e0"/><rect x="747.9" y="499.6" width="1.2" height="11.1" fill="#1d55e0"/><rect x="747.1" y="508" width="2.7" height="2.7" fill="#1d55e0"/><rect x="752.9" y="517.2" width="1.2" height="60.2" fill="#e2191d"/><rect x="752.1" y="517.2" width="2.7" height="60.2" fill="#e2191d"/><rect x="757.9" y="551.3" width="1.2" height="26.1" fill="#1d55e0"/><rect x="757.1" y="551.3" width="2.7" height="26.1" fill="#1d55e0"/><rect x="762.9" y="544" width="1.2" height="15.8" fill="#e4474b"/><rect x="762.1" y="548" width="2.7" height="11.8" fill="#ef7a7c"/><rect x="767.9" y="560.4" width="1.2" height="43.2" fill="#e2191d"/><rect x="767.1" y="565.7" width="2.7" height="3.9" fill="#e2191d"/><rect x="772.9" y="552" width="1.2" height="34.6" fill="#e2191d"/><rect x="772.1" y="560.4" width="2.7" height="26.2" fill="#e2191d"/><rect x="777.9" y="544" width="1.2" height="42.6" fill="#1d55e0"/><rect x="777.1" y="544" width="2.7" height="42.6" fill="#1d55e0"/><rect x="782.9" y="517.2" width="1.2" height="43.2" fill="#e4474b"/><rect x="782.1" y="535.5" width="2.7" height="15.8" fill="#ef7a7c"/><rect x="788.9" y="525.7" width="1.2" height="74" fill="#e2191d"/><rect x="788.1" y="561" width="2.7" height="33.5" fill="#e2191d"/><rect x="793.9" y="569.6" width="1.2" height="24.9" fill="#e4474b"/><rect x="793.1" y="587.3" width="2.7" height="7.2" fill="#ef7a7c"/><rect x="798.9" y="578" width="1.2" height="25.6" fill="#1d55e0"/><rect x="798.1" y="587.7" width="2.7" height="15.3" fill="#1d55e0"/><rect x="803.9" y="578.4" width="1.2" height="43.2" fill="#e2191d"/><rect x="803.1" y="578.4" width="2.7" height="43.2" fill="#e2191d"/><rect x="808.9" y="587.7" width="1.2" height="24.6" fill="#3f74e6"/><rect x="808.1" y="595.3" width="2.7" height="7.7" fill="#6f9cf0"/><rect x="813.9" y="587.7" width="1.2" height="50.8" fill="#e2191d"/><rect x="813.1" y="603.8" width="2.7" height="34.7" fill="#e2191d"/><rect x="818.9" y="629.2" width="1.2" height="26.3" fill="#1d55e0"/><rect x="818.1" y="647" width="2.7" height="3.4" fill="#1d55e0"/><rect x="823.9" y="603.8" width="1.2" height="42.3" fill="#1d55e0"/><rect x="823.1" y="621.6" width="2.7" height="16.9" fill="#1d55e0"/><rect x="828.9" y="621.6" width="1.2" height="16.9" fill="#3f74e6"/><rect x="828.1" y="621.6" width="2.7" height="16.9" fill="#6f9cf0"/><rect x="833.9" y="603.8" width="1.2" height="26.2" fill="#1d55e0"/><rect x="833.1" y="621.6" width="2.7" height="8.4" fill="#1d55e0"/><rect x="839.9" y="612.3" width="1.2" height="70.2" fill="#e4474b"/><rect x="839.1" y="612.3" width="2.7" height="60.9" fill="#ef7a7c"/><rect x="844.9" y="664.8" width="1.2" height="33.8" fill="#e2191d"/><rect x="844.1" y="664.8" width="2.7" height="17.7" fill="#e2191d"/><rect x="849.9" y="664.8" width="1.2" height="26.2" fill="#1d55e0"/><rect x="849.1" y="679.2" width="2.7" height="11.8" fill="#1d55e0"/><rect x="854.9" y="664.8" width="1.2" height="26.2" fill="#3f74e6"/><rect x="854.1" y="664.8" width="2.7" height="8.4" fill="#6f9cf0"/><rect x="859.9" y="621.6" width="1.2" height="33.9" fill="#1d55e0"/><rect x="859.1" y="621.6" width="2.7" height="33.9" fill="#1d55e0"/><rect x="864.9" y="587.7" width="1.2" height="33.9" fill="#1d55e0"/><rect x="864.1" y="612.3" width="2.7" height="3.4" fill="#1d55e0"/><rect x="869.9" y="621.6" width="1.2" height="51.6" fill="#e2191d"/><rect x="869.1" y="621.6" width="2.7" height="51.6" fill="#e2191d"/><rect x="874.9" y="655.5" width="1.2" height="27" fill="#1d55e0"/><rect x="874.1" y="655.5" width="2.7" height="27" fill="#1d55e0"/><rect x="879.9" y="647" width="1.2" height="44" fill="#e4474b"/><rect x="879.1" y="664.8" width="2.7" height="8.4" fill="#ef7a7c"/><rect x="884.9" y="647" width="1.2" height="60" fill="#e2191d"/><rect x="884.1" y="664.8" width="2.7" height="42.2" fill="#e2191d"/><rect x="889.9" y="639.4" width="1.2" height="94.8" fill="#1d55e0"/><rect x="889.1" y="639.4" width="2.7" height="60.1" fill="#1d55e0"/><rect x="895.9" y="612.3" width="1.2" height="52.5" fill="#1d55e0"/><rect x="895.1" y="612.3" width="2.7" height="26.2" fill="#1d55e0"/><rect x="900.9" y="595.3" width="1.2" height="34.7" fill="#3f74e6"/><rect x="900.1" y="612.3" width="2.7" height="9.3" fill="#6f9cf0"/><rect x="905.9" y="560.6" width="1.2" height="51.7" fill="#1d55e0"/><rect x="905.1" y="595.3" width="2.7" height="14.4" fill="#1d55e0"/><rect x="910.9" y="536" width="1.2" height="51.7" fill="#1d55e0"/><rect x="910.1" y="536" width="2.7" height="51.7" fill="#1d55e0"/><rect x="915.9" y="536" width="1.2" height="60.2" fill="#e2191d"/><rect x="915.1" y="540.3" width="2.7" height="47.4" fill="#e2191d"/><rect x="920.9" y="560.6" width="1.2" height="35.6" fill="#e2191d"/><rect x="920.1" y="578.4" width="2.7" height="9.3" fill="#e2191d"/><rect x="925.9" y="570" width="1.2" height="69.4" fill="#e4474b"/><rect x="925.1" y="578.4" width="2.7" height="51.6" fill="#ef7a7c"/><rect x="930.9" y="613.1" width="1.2" height="26.3" fill="#e2191d"/><rect x="930.1" y="621.6" width="2.7" height="17.8" fill="#e2191d"/><rect x="935.9" y="630.9" width="1.2" height="51.6" fill="#1d55e0"/><rect x="935.1" y="630.9" width="2.7" height="51.6" fill="#1d55e0"/><rect x="940.9" y="603.8" width="1.2" height="61" fill="#1d55e0"/><rect x="940.1" y="603.8" width="2.7" height="61" fill="#1d55e0"/><rect x="945.9" y="613.1" width="1.2" height="69.4" fill="#e2191d"/><rect x="945.1" y="613.1" width="2.7" height="69.4" fill="#e2191d"/><rect x="951.9" y="621.6" width="1.2" height="51.6" fill="#1d55e0"/><rect x="951.1" y="664.8" width="2.7" height="2.5" fill="#1d55e0"/><rect x="956.9" y="656.3" width="1.2" height="34.7" fill="#e4474b"/><rect x="956.1" y="656.3" width="2.7" height="26.2" fill="#ef7a7c"/><rect x="961.9" y="656.3" width="1.2" height="44" fill="#1d55e0"/><rect x="961.1" y="656.3" width="2.7" height="34.7" fill="#1d55e0"/><rect x="966.9" y="621.6" width="1.2" height="43.2" fill="#1d55e0"/><rect x="966.1" y="621.6" width="2.7" height="27.1" fill="#1d55e0"/><rect x="971.9" y="622.2" width="1.2" height="25.9" fill="#e4474b"/><rect x="971.1" y="626.9" width="2.7" height="12.9" fill="#ef7a7c"/><rect x="976.9" y="622.2" width="1.2" height="35.2" fill="#1d55e0"/><rect x="976.1" y="622.2" width="2.7" height="8.4" fill="#1d55e0"/><rect x="981.9" y="610.2" width="1.2" height="47.2" fill="#e4474b"/><rect x="981.1" y="630.6" width="2.7" height="9.2" fill="#ef7a7c"/><rect x="986.9" y="604.7" width="1.2" height="25.9" fill="#1d55e0"/><rect x="986.1" y="604.7" width="2.7" height="25.9" fill="#1d55e0"/><rect x="991.9" y="613" width="1.2" height="10.2" fill="#1d55e0"/><rect x="991.1" y="615.8" width="2.7" height="5.5" fill="#1d55e0"/><rect x="996.9" y="562.2" width="1.2" height="43.4" fill="#1d55e0"/><rect x="996.1" y="570.5" width="2.7" height="35.1" fill="#1d55e0"/><rect x="1002.9" y="570.5" width="1.2" height="25.9" fill="#e4474b"/><rect x="1002.1" y="578.8" width="2.7" height="9.2" fill="#ef7a7c"/><rect x="1007.9" y="562.2" width="1.2" height="43.4" fill="#1d55e0"/><rect x="1007.1" y="570.5" width="2.7" height="21.2" fill="#1d55e0"/><rect x="1012.9" y="578.8" width="1.2" height="36" fill="#e2191d"/><rect x="1012.1" y="578.8" width="2.7" height="35.1" fill="#e2191d"/><rect x="1017.9" y="578.8" width="1.2" height="35.1" fill="#3f74e6"/><rect x="1017.1" y="597.3" width="2.7" height="16.6" fill="#6f9cf0"/><rect x="1022.9" y="562.2" width="1.2" height="43.4" fill="#1d55e0"/><rect x="1022.1" y="578.8" width="2.7" height="26.8" fill="#1d55e0"/><rect x="1027.9" y="562.2" width="1.2" height="16.6" fill="#e4474b"/><rect x="1027.2" y="571.4" width="2.7" height="7.4" fill="#ef7a7c"/><rect x="1032.9" y="578.8" width="1.2" height="17.6" fill="#1d55e0"/><rect x="1032.2" y="578.8" width="2.7" height="7.4" fill="#1d55e0"/><rect x="1037.9" y="552.9" width="1.2" height="35.1" fill="#1d55e0"/><rect x="1037.2" y="562.2" width="2.7" height="25.8" fill="#1d55e0"/><rect x="1042.9" y="552.9" width="1.2" height="26.8" fill="#e4474b"/><rect x="1042.2" y="557.6" width="2.7" height="22.1" fill="#ef7a7c"/><rect x="1047.9" y="562.2" width="1.2" height="25.8" fill="#e2191d"/><rect x="1047.2" y="580.7" width="2.7" height="7.3" fill="#e2191d"/><rect x="1052.9" y="578.8" width="1.2" height="26.8" fill="#e2191d"/><rect x="1052.2" y="597.3" width="2.7" height="8.3" fill="#e2191d"/><rect x="1058.9" y="597.3" width="1.2" height="17.5" fill="#e4474b"/><rect x="1058.2" y="599.1" width="2.7" height="5.6" fill="#ef7a7c"/><rect x="1063.9" y="578.8" width="1.2" height="26.8" fill="#1d55e0"/><rect x="1063.2" y="578.8" width="2.7" height="18.5" fill="#1d55e0"/><rect x="1068.9" y="588" width="1.2" height="9.3" fill="#1d55e0"/><rect x="1068.2" y="589.9" width="2.7" height="5.5" fill="#1d55e0"/><rect x="1073.9" y="597.3" width="1.2" height="17.5" fill="#e4474b"/><rect x="1073.2" y="599.1" width="2.7" height="7.4" fill="#ef7a7c"/><rect x="1078.9" y="614.8" width="1.2" height="8.4" fill="#e2191d"/><rect x="1078.2" y="614.8" width="2.7" height="8.4" fill="#e2191d"/><rect x="1083.9" y="589" width="1.2" height="34.2" fill="#1d55e0"/><rect x="1083.2" y="599.1" width="2.7" height="24.1" fill="#1d55e0"/><rect x="1088.9" y="605.6" width="1.2" height="17.6" fill="#e4474b"/><rect x="1088.2" y="605.6" width="2.7" height="17.6" fill="#ef7a7c"/><rect x="1093.9" y="631.5" width="1.2" height="25.9" fill="#e2191d"/><rect x="1093.2" y="631.5" width="2.7" height="25.9" fill="#e2191d"/><rect x="1098.9" y="649" width="1.2" height="8.4" fill="#1d55e0"/><rect x="1098.2" y="649" width="2.7" height="2.8" fill="#1d55e0"/><rect x="1103.9" y="624.1" width="1.2" height="24.9" fill="#1d55e0"/><rect x="1103.2" y="639.8" width="2.7" height="2.8" fill="#1d55e0"/><rect x="1108.9" y="640.7" width="1.2" height="8.3" fill="#1d55e0"/><rect x="1108.2" y="640.7" width="2.7" height="8.3" fill="#1d55e0"/><rect x="1114.9" y="640.7" width="1.2" height="8.3" fill="#e4474b"/><rect x="1114.2" y="640.7" width="2.7" height="3.7" fill="#ef7a7c"/><rect x="1119.9" y="649" width="1.2" height="43.5" fill="#e2191d"/><rect x="1119.2" y="649" width="2.7" height="43.5" fill="#e2191d"/><rect x="1124.9" y="692.5" width="1.2" height="17.5" fill="#1d55e0"/><rect x="1124.2" y="692.5" width="2.7" height="17.5" fill="#1d55e0"/><rect x="1129.9" y="709" width="1.2" height="17.7" fill="#1d55e0"/><rect x="1129.2" y="709" width="2.7" height="17.7" fill="#1d55e0"/><rect x="1134.9" y="718.3" width="1.2" height="25.9" fill="#e4474b"/><rect x="1134.2" y="718.3" width="2.7" height="25.9" fill="#ef7a7c"/><rect x="1139.9" y="710.2" width="1.2" height="60.3" fill="#1d55e0"/><rect x="1139.2" y="722" width="2.7" height="28" fill="#1d55e0"/><rect x="1144.9" y="710.2" width="1.2" height="43.1" fill="#e4474b"/><rect x="1144.2" y="722" width="2.7" height="21" fill="#ef7a7c"/><rect x="1149.9" y="736" width="1.2" height="17.3" fill="#1d55e0"/><rect x="1149.2" y="736" width="2.7" height="2" fill="#1d55e0"/><rect x="1154.9" y="710.2" width="1.2" height="25.8" fill="#1d55e0"/><rect x="1154.2" y="726" width="2.7" height="9" fill="#1d55e0"/><rect x="1159.9" y="701.6" width="1.2" height="34.4" fill="#1d55e0"/><rect x="1159.2" y="701.6" width="2.7" height="34.4" fill="#1d55e0"/><rect x="1165.9" y="658.4" width="1.2" height="34.6" fill="#3f74e6"/><rect x="1165.2" y="658.4" width="2.7" height="34.6" fill="#6f9cf0"/><rect x="1170.9" y="649.8" width="1.2" height="43.2" fill="#e2191d"/><rect x="1170.2" y="668" width="2.7" height="25" fill="#e2191d"/><rect x="1175.9" y="641.2" width="1.2" height="51.8" fill="#1d55e0"/><rect x="1175.2" y="641.2" width="2.7" height="51.8" fill="#1d55e0"/><rect x="1180.9" y="641.2" width="1.2" height="25.8" fill="#e2191d"/><rect x="1180.2" y="641.2" width="2.7" height="25.8" fill="#e2191d"/><rect x="1185.9" y="675.7" width="1.2" height="25.9" fill="#e2191d"/><rect x="1185.2" y="675.7" width="2.7" height="17.3" fill="#e2191d"/><rect x="1190.9" y="675.7" width="1.2" height="12.9" fill="#3f74e6"/><rect x="1190.2" y="675.7" width="2.7" height="12.9" fill="#6f9cf0"/><rect x="1195.9" y="675.7" width="1.2" height="8.6" fill="#e2191d"/><rect x="1195.2" y="676.8" width="2.7" height="7.5" fill="#e2191d"/><rect x="1200.9" y="693" width="1.2" height="8.6" fill="#1d55e0"/><rect x="1200.2" y="693" width="2.7" height="8.6" fill="#1d55e0"/><rect x="1205.9" y="693" width="1.2" height="8.6" fill="#1d55e0"/><rect x="1205.2" y="693" width="2.7" height="8.6" fill="#1d55e0"/><rect x="1210.9" y="693" width="1.2" height="8.6" fill="#1d55e0"/><rect x="1210.2" y="693" width="2.7" height="8.6" fill="#1d55e0"/><rect x="1215.9" y="675.7" width="1.2" height="17.3" fill="#e2191d"/><rect x="1215.2" y="675.7" width="2.7" height="17.3" fill="#e2191d"/><rect x="1221.9" y="675.7" width="1.2" height="25.9" fill="#e2191d"/><rect x="1221.2" y="684.3" width="2.7" height="8.7" fill="#e2191d"/><rect x="1226.9" y="675.7" width="1.2" height="17.3" fill="#e2191d"/><rect x="1226.2" y="675.7" width="2.7" height="17.3" fill="#e2191d"/><rect x="1231.9" y="675.7" width="1.2" height="10.8" fill="#1d55e0"/><rect x="1231.2" y="675.7" width="2.7" height="10.8" fill="#1d55e0"/><rect x="1236.9" y="675.7" width="1.2" height="43.1" fill="#1d55e0"/><rect x="1236.2" y="675.7" width="2.7" height="12.9" fill="#1d55e0"/><rect x="1241.9" y="675.7" width="1.2" height="25.9" fill="#e2191d"/><rect x="1241.2" y="684.3" width="2.7" height="17.3" fill="#e2191d"/><rect x="1246.9" y="632.6" width="1.2" height="51.7" fill="#1d55e0"/><rect x="1246.2" y="649.8" width="2.7" height="34.5" fill="#1d55e0"/><rect x="1251.9" y="649.8" width="1.2" height="17.2" fill="#e4474b"/><rect x="1251.2" y="654.1" width="2.7" height="12.9" fill="#ef7a7c"/><rect x="1256.9" y="616.4" width="1.2" height="59.3" fill="#1d55e0"/><rect x="1256.2" y="625" width="2.7" height="50.7" fill="#1d55e0"/><rect x="1261.9" y="590.5" width="1.2" height="50.7" fill="#e4474b"/><rect x="1261.2" y="615.3" width="2.7" height="9.7" fill="#ef7a7c"/><rect x="1266.9" y="555" width="1.2" height="77.6" fill="#1d55e0"/><rect x="1266.2" y="555" width="2.7" height="77.6" fill="#1d55e0"/><rect x="1272.9" y="520.5" width="1.2" height="43.1" fill="#e2191d"/><rect x="1272.2" y="547.4" width="2.7" height="7.6" fill="#e2191d"/><rect x="1277.9" y="547.4" width="1.2" height="18.3" fill="#1d55e0"/><rect x="1277.2" y="563.6" width="2.7" height="2.1" fill="#1d55e0"/><rect x="1282.9" y="563.6" width="1.2" height="34.4" fill="#e4474b"/><rect x="1282.2" y="572.2" width="2.7" height="9.8" fill="#ef7a7c"/><rect x="1287.9" y="546.3" width="1.2" height="51.7" fill="#1d55e0"/><rect x="1287.2" y="546.3" width="2.7" height="25.9" fill="#1d55e0"/><rect x="1292.9" y="538.8" width="1.2" height="24.8" fill="#1d55e0"/><rect x="1292.2" y="538.8" width="2.7" height="15.1" fill="#1d55e0"/><rect x="1297.9" y="511.9" width="1.2" height="34.4" fill="#3f74e6"/><rect x="1297.2" y="530.2" width="2.7" height="11.8" fill="#6f9cf0"/><rect x="1302.9" y="520.5" width="1.2" height="25.8" fill="#1d55e0"/><rect x="1302.2" y="520.5" width="2.7" height="25.8" fill="#1d55e0"/><rect x="1307.9" y="530.2" width="1.2" height="24.8" fill="#e4474b"/><rect x="1307.2" y="534.5" width="2.7" height="20.5" fill="#ef7a7c"/><rect x="1312.9" y="537.7" width="1.2" height="25.9" fill="#1d55e0"/><rect x="1312.2" y="555" width="2.7" height="8.6" fill="#1d55e0"/><rect x="1317.9" y="555" width="1.2" height="25.8" fill="#e2191d"/><rect x="1317.2" y="555" width="2.7" height="25.8" fill="#e2191d"/><rect x="1322.9" y="590" width="1.2" height="34" fill="#e4474b"/><rect x="1322.2" y="590" width="2.7" height="16" fill="#ef7a7c"/><rect x="1328.9" y="590" width="1.2" height="43" fill="#1d55e0"/><rect x="1328.2" y="600" width="2.7" height="15" fill="#1d55e0"/><rect x="1333.9" y="590" width="1.2" height="34" fill="#e2191d"/><rect x="1333.2" y="590" width="2.7" height="34" fill="#e2191d"/><rect x="1338.9" y="617" width="1.2" height="34" fill="#e2191d"/><rect x="1338.2" y="617" width="2.7" height="16" fill="#e2191d"/><rect x="1343.9" y="607" width="1.2" height="35" fill="#1d55e0"/><rect x="1343.2" y="617" width="2.7" height="23" fill="#1d55e0"/><rect x="1348.9" y="599" width="1.2" height="69" fill="#e2191d"/><rect x="1348.2" y="634" width="2.7" height="8" fill="#e2191d"/><rect x="1353.9" y="643" width="1.2" height="52" fill="#e4474b"/><rect x="1353.2" y="652" width="2.7" height="8" fill="#ef7a7c"/><rect x="1358.9" y="634" width="1.2" height="61" fill="#e2191d"/><rect x="1358.2" y="634" width="2.7" height="61" fill="#e2191d"/><rect x="1363.9" y="651" width="1.2" height="35" fill="#e2191d"/><rect x="1363.2" y="652" width="2.7" height="34" fill="#e2191d"/><rect x="1368.9" y="660" width="1.2" height="43" fill="#3f74e6"/><rect x="1368.2" y="660" width="2.7" height="34" fill="#6f9cf0"/><rect x="1373.9" y="660" width="1.2" height="43" fill="#e2191d"/><rect x="1373.2" y="668" width="2.7" height="35" fill="#e2191d"/><rect x="1378.9" y="695" width="1.2" height="120" fill="#e4474b"/><rect x="1378.2" y="695" width="2.7" height="103" fill="#ef7a7c"/><rect x="1384.9" y="738" width="1.2" height="52" fill="#1d55e0"/><rect x="1384.2" y="764" width="2.7" height="26" fill="#1d55e0"/><rect x="1389.9" y="695" width="1.2" height="68" fill="#1d55e0"/><rect x="1389.2" y="710" width="2.7" height="52" fill="#1d55e0"/><rect x="1394.9" y="695" width="1.2" height="8" fill="#1d55e0"/><rect x="1394.2" y="695" width="2.7" height="8" fill="#1d55e0"/><defs><clipPath id="gc"><rect x="30.5" y="0" width="274.9" height="912"/><rect x="331" y="0" width="18" height="912"/><rect x="361" y="0" width="12" height="912"/><rect x="426" y="0" width="26" height="912"/><rect x="905.8" y="0" width="16.1" height="912"/><rect x="982" y="0" width="64" height="912"/><rect x="1059" y="0" width="9" height="912"/><rect x="1078" y="0" width="6.3" height="912"/><rect x="1241.3" y="0" width="88.7" height="912"/></clipPath></defs><polyline points="0,383.4 1.2,383.5 2.8,383.6 4.8,383.8 6.8,384 8.7,384.3 10.2,384.7 11.2,385.2 11.9,385.8 12.4,386.5 13,387.2 13.8,387.9 15.2,388.5 17.1,389.1 19.4,389.8 21.9,390.5 24.6,391 27.5,391.2 30.5,391 33.6,390.4 37,389.4 40.5,388.2 44,386.7 47.5,385.1 50.8,383.4 54,381.5 57.3,379.2 60.5,376.8 63.5,374.5 66.3,372.4 68.6,370.7 70.3,369.7 71.4,369.3 72.2,369.1 73.1,368.9 74.3,368.3 76.2,367 78.9,365 82.1,362.6 85.7,359.7 89.4,356.7 93.1,353.5 96.5,350.4 99.6,347.2 102.7,343.7 105.7,340.2 108.6,336.6 111.5,333.2 114.3,330 117.1,327 119.8,324.1 122.4,321.4 125,318.7 127.6,316.2 130,313.7 132.2,311.4 134.3,309.2 136.3,307.1 138.3,305 140.5,302.9 143,300.7 145.9,298.3 149.1,295.9 152.4,293.3 155.9,290.9 159.3,288.5 162.7,286.3 165.9,284.3 169,282.4 172.2,280.6 175.4,278.9 178.7,277.3 182.4,275.8 186.4,274.4 190.6,273.3 195,272.2 199.6,271.1 204.1,269.9 208.5,268.6 212.9,267.1 217.5,265.4 222,263.7 226.5,261.9 230.7,260.3 234.7,258.8 238.3,257.5 241.7,256.3 244.9,255.2 248,254.1 251.1,253.1 254.3,252.2 257.4,251.4 260.4,250.7 263.4,250 266.6,249.4 270,248.6 274,247.6 278.8,246.3 284.4,244.6 290.3,242.9 296.1,241.2 301.3,239.8 305.4,239 308.3,238.7 310.1,238.9 311.4,239.4 312.5,240.1 313.8,240.8 315.5,241.4 317.8,242 320.2,242.8 322.8,243.6 325.5,244.4 328.3,245.1 331,245.5 333.8,245.7 336.6,245.7 339.5,245.5 342.4,245.3 345.2,245.1 348,245 350.8,245 353.7,245 356.5,245 359.2,245 361.8,245 364,245 365.9,244.9 367.5,244.8 368.8,244.7 370.1,244.6 371.5,244.7 373,245 374.6,245.5 376.1,246.2 377.6,247.1 379.3,248 381.2,249 383.5,250 386.2,251 389.2,252.2 392.4,253.3 395.9,254.6 399.4,255.8 403,257 406.8,258.3 410.9,259.7 415.1,261.1 419.2,262.5 423.2,263.6 426.7,264.5 429.7,265 432.4,265.3 434.8,265.4 437.2,265.4 439.7,265.4 442.4,265.5 445.6,265.6 449.1,265.7 452.7,265.8 456.2,265.9 459.4,266 462,266.3 463.9,266.6 465.2,266.8 466.1,267.1 467.1,267.5 468.3,268.2 470,269.3 472.4,270.7 475.1,272.5 478.2,274.4 481.3,276.6 484.5,279 487.5,281.6 490.4,284.4 493.4,287.5 496.3,290.8 499.2,294.2 502.2,297.6 505.1,300.9 508.1,304.2 511.1,307.7 514.1,311.2 517,314.5 519.9,317.6 522.6,320.2 525.1,322.3 527.4,324.1 529.7,325.6 531.9,326.8 534.2,328 536.7,329 539.4,329.8 542.1,330.2 545,330.5 548,330.9 551,331.5 554.2,332.5 557.4,334.1 560.6,336.1 563.9,338.3 567.4,340.6 571.1,342.8 575.3,344.7 580.2,346.3 585.7,347.7 591.6,349 597.3,350.3 602.5,351.4 606.8,352.6 609.9,353.8 612.2,354.9 614,356 615.5,357.1 617.1,358 619.1,358.8 621.5,359.4 624.2,359.9 626.9,360.2 629.6,360.5 632.2,360.8 634.5,361.2 636.5,361.4 638.2,361.2 639.8,361.1 641.4,361.3 643.2,362.2 645.4,364 647.8,367 650.4,371 653.2,375.6 656.2,380.6 659.5,385.6 663,390.4 666.9,395.2 671.1,400.2 675.6,405.3 680.2,410.2 684.8,414.6 689.3,418.4 693.7,421.3 698.1,423.5 702.4,425.3 706.8,426.9 711.2,428.6 715.6,430.7 720,433 724.3,435.2 728.6,437.6 733,440.1 737.5,443.1 742,446.5 746.9,450.8 752,455.9 757.3,461.3 762.3,466.7 767,471.5 770.9,475.3 773.8,477.8 776,479.2 777.6,480.1 779.2,480.9 781.2,482.2 784,484.5 787.8,488.1 792.4,492.5 797.3,497.5 802.2,502.4 806.6,507 810.2,510.7 812.7,513.4 814.5,515.4 815.9,517.1 817,518.5 818.3,520.1 820,522 822,524.2 824.1,526.3 826.3,528.6 828.6,531 831.2,533.8 833.9,536.9 837,540.8 840.6,545.3 844.3,550.2 848,554.9 851.3,559.1 854.2,562.3 856.4,564.1 857.9,564.9 859.2,565.2 860.5,565.3 862.1,565.9 864.3,567.4 867.3,570.1 870.8,573.6 874.7,577.6 878.5,581.6 882,585.1 884.7,587.7 886.5,589.4 887.7,590.4 888.4,591.1 889.1,591.4 890,591.7 891.4,592 893.4,592.4 895.9,592.7 898.5,593 901.2,593.1 903.7,593.2 905.8,593.1 907.5,592.9 909,592.5 910.3,592 911.5,591.5 912.7,591.1 914,590.8 915.3,590.6 916.7,590.6 918,590.5 919.4,590.6 920.7,590.7 921.9,590.8 923,591 923.9,591.2 924.8,591.5 925.9,591.8 927.1,592.3 928.7,592.8 930.7,593.4 933.1,594 935.7,594.7 938.4,595.6 941.2,596.6 943.9,597.9 946.6,599.6 949.3,601.6 952,603.8 954.9,606.1 957.8,608.1 960.9,609.7 964.1,611 967.5,612 970.9,612.9 974.5,613.5 978.2,613.9 982,614 986,613.7 990.3,613.1 994.7,612.2 999,611.2 1003.2,610.2 1007,609.3 1010.3,608.5 1013.3,607.7 1016,606.9 1018.8,606.2 1021.9,605.4 1025.4,604.7 1029.6,604 1034.2,603.3 1039.2,602.7 1044.1,602.1 1048.9,601.5 1053.2,601 1057.1,600.5 1060.8,600.1 1064.3,599.6 1067.6,599.3 1070.6,599.1 1073.5,599 1075.9,599 1077.8,599.1 1079.5,599.2 1081.3,599.6 1083.5,600.1 1086.4,601 1090.3,602.2 1095,603.7 1100.2,605.5 1105.3,607.4 1110.1,609.3 1114.2,611.2 1117.5,613.1 1120.2,615.2 1122.6,617.2 1124.8,619.3 1126.9,621.3 1129,623.2 1131,624.8 1132.7,626.2 1134.4,627.4 1136,628.8 1137.9,630.5 1140,632.6 1142.5,635.5 1145.4,639 1148.3,642.8 1151.4,646.4 1154.4,649.7 1157.2,652 1159.8,653.3 1162.1,653.9 1164.5,653.9 1166.9,653.8 1169.4,653.8 1172.3,654.1 1175.5,654.8 1179,655.6 1182.7,656.5 1186.5,657.5 1190.2,658.5 1193.9,659.5 1197.4,660.5 1200.9,661.7 1204.4,662.8 1207.9,664 1211.6,665 1215.4,666 1219.6,666.9 1224.1,667.9 1228.8,668.8 1233.3,669.5 1237.6,670 1241.3,670.3 1244.4,670.4 1246.9,670.3 1249.1,670.1 1251.3,669.5 1253.6,668.5 1256.4,667 1259.7,664.8 1263.3,661.9 1267.1,658.7 1270.9,655.2 1274.6,651.8 1278,648.7 1281.2,645.8 1284.3,642.9 1287.3,640 1290.1,637.3 1292.8,634.8 1295.2,632.6 1297.3,630.7 1299.2,629.1 1300.8,627.7 1302.4,626.4 1304.1,625.2 1306,624 1308.2,622.7 1310.6,621.5 1313,620.3 1315.5,619.2 1317.9,618.3 1320,617.5 1321.8,616.9 1323.3,616.5 1324.6,616.2 1326.1,616 1327.8,615.9 1330,616 1332.9,616.2 1336.3,616.6 1340,617.2 1343.7,617.8 1347.1,618.4 1350,619 1352.3,619.6 1354.1,620.3 1355.8,620.9 1357.2,621.6 1358.6,622.3 1360,623 1361.5,623.7 1362.9,624.4 1364.2,625.1 1365.6,625.7 1366.8,626.4 1368,627 1369.1,627.4 1370,627.6 1370.9,627.8 1371.8,628.1 1372.8,628.8 1374,630 1375.4,632 1377,634.7 1378.8,637.8 1380.5,640.9 1382.3,643.8 1384,646 1385.8,647.6 1387.7,649 1389.6,650 1391.4,650.8 1392.9,651.5 1394,652" fill="none" stroke="#e3171b" stroke-width="2.8" stroke-linejoin="round" stroke-linecap="round"/><polyline points="0,383.4 1.2,383.5 2.8,383.6 4.8,383.8 6.8,384 8.7,384.3 10.2,384.7 11.2,385.2 11.9,385.8 12.4,386.5 13,387.2 13.8,387.9 15.2,388.5 17.1,389.1 19.4,389.8 21.9,390.5 24.6,391 27.5,391.2 30.5,391 33.6,390.4 37,389.4 40.5,388.2 44,386.7 47.5,385.1 50.8,383.4 54,381.5 57.3,379.2 60.5,376.8 63.5,374.5 66.3,372.4 68.6,370.7 70.3,369.7 71.4,369.3 72.2,369.1 73.1,368.9 74.3,368.3 76.2,367 78.9,365 82.1,362.6 85.7,359.7 89.4,356.7 93.1,353.5 96.5,350.4 99.6,347.2 102.7,343.7 105.7,340.2 108.6,336.6 111.5,333.2 114.3,330 117.1,327 119.8,324.1 122.4,321.4 125,318.7 127.6,316.2 130,313.7 132.2,311.4 134.3,309.2 136.3,307.1 138.3,305 140.5,302.9 143,300.7 145.9,298.3 149.1,295.9 152.4,293.3 155.9,290.9 159.3,288.5 162.7,286.3 165.9,284.3 169,282.4 172.2,280.6 175.4,278.9 178.7,277.3 182.4,275.8 186.4,274.4 190.6,273.3 195,272.2 199.6,271.1 204.1,269.9 208.5,268.6 212.9,267.1 217.5,265.4 222,263.7 226.5,261.9 230.7,260.3 234.7,258.8 238.3,257.5 241.7,256.3 244.9,255.2 248,254.1 251.1,253.1 254.3,252.2 257.4,251.4 260.4,250.7 263.4,250 266.6,249.4 270,248.6 274,247.6 278.8,246.3 284.4,244.6 290.3,242.9 296.1,241.2 301.3,239.8 305.4,239 308.3,238.7 310.1,238.9 311.4,239.4 312.5,240.1 313.8,240.8 315.5,241.4 317.8,242 320.2,242.8 322.8,243.6 325.5,244.4 328.3,245.1 331,245.5 333.8,245.7 336.6,245.7 339.5,245.5 342.4,245.3 345.2,245.1 348,245 350.8,245 353.7,245 356.5,245 359.2,245 361.8,245 364,245 365.9,244.9 367.5,244.8 368.8,244.7 370.1,244.6 371.5,244.7 373,245 374.6,245.5 376.1,246.2 377.6,247.1 379.3,248 381.2,249 383.5,250 386.2,251 389.2,252.2 392.4,253.3 395.9,254.6 399.4,255.8 403,257 406.8,258.3 410.9,259.7 415.1,261.1 419.2,262.5 423.2,263.6 426.7,264.5 429.7,265 432.4,265.3 434.8,265.4 437.2,265.4 439.7,265.4 442.4,265.5 445.6,265.6 449.1,265.7 452.7,265.8 456.2,265.9 459.4,266 462,266.3 463.9,266.6 465.2,266.8 466.1,267.1 467.1,267.5 468.3,268.2 470,269.3 472.4,270.7 475.1,272.5 478.2,274.4 481.3,276.6 484.5,279 487.5,281.6 490.4,284.4 493.4,287.5 496.3,290.8 499.2,294.2 502.2,297.6 505.1,300.9 508.1,304.2 511.1,307.7 514.1,311.2 517,314.5 519.9,317.6 522.6,320.2 525.1,322.3 527.4,324.1 529.7,325.6 531.9,326.8 534.2,328 536.7,329 539.4,329.8 542.1,330.2 545,330.5 548,330.9 551,331.5 554.2,332.5 557.4,334.1 560.6,336.1 563.9,338.3 567.4,340.6 571.1,342.8 575.3,344.7 580.2,346.3 585.7,347.7 591.6,349 597.3,350.3 602.5,351.4 606.8,352.6 609.9,353.8 612.2,354.9 614,356 615.5,357.1 617.1,358 619.1,358.8 621.5,359.4 624.2,359.9 626.9,360.2 629.6,360.5 632.2,360.8 634.5,361.2 636.5,361.4 638.2,361.2 639.8,361.1 641.4,361.3 643.2,362.2 645.4,364 647.8,367 650.4,371 653.2,375.6 656.2,380.6 659.5,385.6 663,390.4 666.9,395.2 671.1,400.2 675.6,405.3 680.2,410.2 684.8,414.6 689.3,418.4 693.7,421.3 698.1,423.5 702.4,425.3 706.8,426.9 711.2,428.6 715.6,430.7 720,433 724.3,435.2 728.6,437.6 733,440.1 737.5,443.1 742,446.5 746.9,450.8 752,455.9 757.3,461.3 762.3,466.7 767,471.5 770.9,475.3 773.8,477.8 776,479.2 777.6,480.1 779.2,480.9 781.2,482.2 784,484.5 787.8,488.1 792.4,492.5 797.3,497.5 802.2,502.4 806.6,507 810.2,510.7 812.7,513.4 814.5,515.4 815.9,517.1 817,518.5 818.3,520.1 820,522 822,524.2 824.1,526.3 826.3,528.6 828.6,531 831.2,533.8 833.9,536.9 837,540.8 840.6,545.3 844.3,550.2 848,554.9 851.3,559.1 854.2,562.3 856.4,564.1 857.9,564.9 859.2,565.2 860.5,565.3 862.1,565.9 864.3,567.4 867.3,570.1 870.8,573.6 874.7,577.6 878.5,581.6 882,585.1 884.7,587.7 886.5,589.4 887.7,590.4 888.4,591.1 889.1,591.4 890,591.7 891.4,592 893.4,592.4 895.9,592.7 898.5,593 901.2,593.1 903.7,593.2 905.8,593.1 907.5,592.9 909,592.5 910.3,592 911.5,591.5 912.7,591.1 914,590.8 915.3,590.6 916.7,590.6 918,590.5 919.4,590.6 920.7,590.7 921.9,590.8 923,591 923.9,591.2 924.8,591.5 925.9,591.8 927.1,592.3 928.7,592.8 930.7,593.4 933.1,594 935.7,594.7 938.4,595.6 941.2,596.6 943.9,597.9 946.6,599.6 949.3,601.6 952,603.8 954.9,606.1 957.8,608.1 960.9,609.7 964.1,611 967.5,612 970.9,612.9 974.5,613.5 978.2,613.9 982,614 986,613.7 990.3,613.1 994.7,612.2 999,611.2 1003.2,610.2 1007,609.3 1010.3,608.5 1013.3,607.7 1016,606.9 1018.8,606.2 1021.9,605.4 1025.4,604.7 1029.6,604 1034.2,603.3 1039.2,602.7 1044.1,602.1 1048.9,601.5 1053.2,601 1057.1,600.5 1060.8,600.1 1064.3,599.6 1067.6,599.3 1070.6,599.1 1073.5,599 1075.9,599 1077.8,599.1 1079.5,599.2 1081.3,599.6 1083.5,600.1 1086.4,601 1090.3,602.2 1095,603.7 1100.2,605.5 1105.3,607.4 1110.1,609.3 1114.2,611.2 1117.5,613.1 1120.2,615.2 1122.6,617.2 1124.8,619.3 1126.9,621.3 1129,623.2 1131,624.8 1132.7,626.2 1134.4,627.4 1136,628.8 1137.9,630.5 1140,632.6 1142.5,635.5 1145.4,639 1148.3,642.8 1151.4,646.4 1154.4,649.7 1157.2,652 1159.8,653.3 1162.1,653.9 1164.5,653.9 1166.9,653.8 1169.4,653.8 1172.3,654.1 1175.5,654.8 1179,655.6 1182.7,656.5 1186.5,657.5 1190.2,658.5 1193.9,659.5 1197.4,660.5 1200.9,661.7 1204.4,662.8 1207.9,664 1211.6,665 1215.4,666 1219.6,666.9 1224.1,667.9 1228.8,668.8 1233.3,669.5 1237.6,670 1241.3,670.3 1244.4,670.4 1246.9,670.3 1249.1,670.1 1251.3,669.5 1253.6,668.5 1256.4,667 1259.7,664.8 1263.3,661.9 1267.1,658.7 1270.9,655.2 1274.6,651.8 1278,648.7 1281.2,645.8 1284.3,642.9 1287.3,640 1290.1,637.3 1292.8,634.8 1295.2,632.6 1297.3,630.7 1299.2,629.1 1300.8,627.7 1302.4,626.4 1304.1,625.2 1306,624 1308.2,622.7 1310.6,621.5 1313,620.3 1315.5,619.2 1317.9,618.3 1320,617.5 1321.8,616.9 1323.3,616.5 1324.6,616.2 1326.1,616 1327.8,615.9 1330,616 1332.9,616.2 1336.3,616.6 1340,617.2 1343.7,617.8 1347.1,618.4 1350,619 1352.3,619.6 1354.1,620.3 1355.8,620.9 1357.2,621.6 1358.6,622.3 1360,623 1361.5,623.7 1362.9,624.4 1364.2,625.1 1365.6,625.7 1366.8,626.4 1368,627 1369.1,627.4 1370,627.6 1370.9,627.8 1371.8,628.1 1372.8,628.8 1374,630 1375.4,632 1377,634.7 1378.8,637.8 1380.5,640.9 1382.3,643.8 1384,646 1385.8,647.6 1387.7,649 1389.6,650 1391.4,650.8 1392.9,651.5 1394,652" fill="none" stroke="#1db41f" stroke-width="2.8" stroke-linejoin="round" clip-path="url(#gc)"/><rect x="0" y="694.8" width="1566" height="1.1" fill="#3a3a3a"/><rect x="1369.5" y="767.5" width="41" height="12" fill="#fff0f0" fill-opacity="0.8" stroke="#d0161b" stroke-width="2"/><rect x="1573" y="121" width="2.4" height="1147" fill="#b6b6b6"/><rect x="1575" y="140.4" width="6" height="2" fill="#a8a8a8"/><rect x="1575" y="168.1" width="4" height="1.6" fill="#b0b0b0"/><rect x="1575" y="195.5" width="6" height="2" fill="#a8a8a8"/><rect x="1575" y="223.2" width="4" height="1.6" fill="#b0b0b0"/><rect x="1575" y="250.6" width="6" height="2" fill="#a8a8a8"/><rect x="1575" y="278.3" width="4" height="1.6" fill="#b0b0b0"/><rect x="1575" y="305.6" width="6" height="2" fill="#a8a8a8"/><rect x="1575" y="333.4" width="4" height="1.6" fill="#b0b0b0"/><rect x="1575" y="360.7" width="6" height="2" fill="#a8a8a8"/><rect x="1575" y="388.5" width="4" height="1.6" fill="#b0b0b0"/><rect x="1575" y="415.8" width="6" height="2" fill="#a8a8a8"/><rect x="1575" y="443.5" width="4" height="1.6" fill="#b0b0b0"/><rect x="1575" y="470.9" width="6" height="2" fill="#a8a8a8"/><rect x="1575" y="498.6" width="4" height="1.6" fill="#b0b0b0"/><rect x="1575" y="526" width="6" height="2" fill="#a8a8a8"/><rect x="1575" y="553.7" width="4" height="1.6" fill="#b0b0b0"/><rect x="1575" y="581" width="6" height="2" fill="#a8a8a8"/><rect x="1575" y="608.8" width="4" height="1.6" fill="#b0b0b0"/><rect x="1575" y="636.1" width="6" height="2" fill="#a8a8a8"/><rect x="1575" y="663.9" width="4" height="1.6" fill="#b0b0b0"/><rect x="1575" y="691.2" width="6" height="2" fill="#a8a8a8"/><rect x="1575" y="718.9" width="4" height="1.6" fill="#b0b0b0"/><rect x="1575" y="746.3" width="6" height="2" fill="#a8a8a8"/><rect x="1575" y="774" width="4" height="1.6" fill="#b0b0b0"/><rect x="1575" y="801.4" width="6" height="2" fill="#a8a8a8"/><rect x="1575" y="829.1" width="4" height="1.6" fill="#b0b0b0"/><rect x="1575" y="856.4" width="6" height="2" fill="#a8a8a8"/><rect x="1575" y="937.7" width="6" height="2" fill="#a8a8a8"/><rect x="1575" y="970.4" width="4" height="1.6" fill="#b0b0b0"/><rect x="1575" y="1002.7" width="6" height="2" fill="#a8a8a8"/><rect x="1575" y="1035.4" width="4" height="1.6" fill="#b0b0b0"/><rect x="1575" y="1067.7" width="6" height="2" fill="#a8a8a8"/><rect x="1575" y="1100.5" width="4" height="1.6" fill="#b0b0b0"/><rect x="1575" y="1132.8" width="6" height="2" fill="#a8a8a8"/><rect x="1575" y="1165.5" width="4" height="1.6" fill="#b0b0b0"/><rect x="1575" y="1197.8" width="6" height="2" fill="#a8a8a8"/><rect x="1575" y="1230.5" width="4" height="1.6" fill="#b0b0b0"/><rect x="1575" y="1262.8" width="6" height="2" fill="#a8a8a8"/><text x="1584" y="145" class="ax">150,300</text><text x="1584" y="200.1" class="ax">150,100</text><text x="1584" y="255.2" class="ax">149,900</text><text x="1584" y="310.2" class="ax">149,700</text><text x="1584" y="365.3" class="ax">149,500</text><text x="1584" y="420.4" class="ax">149,300</text><text x="1584" y="475.5" class="ax">149,100</text><text x="1584" y="530.6" class="ax">148,900</text><text x="1584" y="585.6" class="ax">148,700</text><text x="1584" y="640.7" class="ax">148,500</text><text x="1584" y="750.9" class="ax">148,100</text><text x="1584" y="806" class="ax">147,900</text><text x="1584" y="861" class="ax">147,700</text><text x="1584" y="942.9" class="ax2">0,220</text><text x="1584" y="1007.9" class="ax2">0,180</text><text x="1584" y="1072.9" class="ax2">0,140</text><text x="1584" y="1138" class="ax2">0,100</text><text x="1584" y="1203" class="ax2">0,060</text><text x="1584" y="1268" class="ax2">0,020</text><text x="171.5" y="105" class="dt">26 Jan</text><text x="624.5" y="105" class="dt">29 Jan</text><text x="1079" y="105" class="dt">30 Jan</text><text x="1546.5" y="105" class="dt">31 Jan</text><rect x="1566.3" y="683.2" width="80" height="25.4" rx="4.5" fill="#0d9e10"/><text x="1573.3" y="701.8" class="cp">148,2900</text><rect x="0" y="118" width="1653" height="2.8" fill="#bababa"/><rect x="0" y="912" width="1653" height="2.8" fill="#1e2730"/><rect x="1651" y="86" width="2" height="1182" fill="#1e2730"/></svg>

<!-- title bar -->
<div id="top" class="abs">
  <svg class="abs" style="left:0;top:-1px" width="1653" height="52">
    <rect x="15" y="17" width="21" height="3" fill="#8b9096"/>
    <rect x="15" y="25" width="21" height="3" fill="#8b9096"/>
    <rect x="15" y="33" width="21" height="3" fill="#8b9096"/>
    <rect x="53" y="0" width="2" height="52" fill="#16191d"/>
    <rect x="55" y="0" width="1" height="52" fill="#50555b"/>
    <circle cx="264" cy="22.5" r="6.5" fill="none" stroke="#6c7177" stroke-width="2"/>
    <line x1="268.8" y1="27.5" x2="275.5" y2="34.5" stroke="#6c7177" stroke-width="2.4"/>
    <!-- brown box -->
    <defs>
      <linearGradient id="br" x1="0" y1="0" x2="0" y2="1"><stop offset="0" stop-color="#6d5c3e"/><stop offset="1" stop-color="#3b3730"/></linearGradient>
      <linearGradient id="tl" x1="0" y1="0" x2="0" y2="1"><stop offset="0" stop-color="#30687a"/><stop offset="1" stop-color="#1f3b46"/></linearGradient>
    </defs>
    <rect x="1337" y="0" width="2" height="52" fill="#1f2226"/>
    <rect x="1339" y="0" width="107" height="52" fill="url(#br)"/>
    <rect x="1446" y="0" width="107" height="52" fill="url(#tl)"/>
    <rect x="1553" y="0" width="19" height="52" fill="#4a4e54"/>
    <rect x="1555" y="3" width="15" height="10" fill="#2b2e32"/>
    <rect x="1555" y="15" width="15" height="10" fill="#2b2e32"/>
    <rect x="1555" y="27" width="15" height="10" fill="#2b2e32"/>
    <rect x="1555" y="39" width="15" height="10" fill="#2b2e32"/>
    <rect x="1572" y="0" width="1.5" height="52" fill="#2a2d32"/>
    <rect x="1612" y="0" width="1.5" height="52" fill="#2a2d32"/>
    <rect x="1584" y="17" width="20" height="20" fill="none" stroke="#6e7379" stroke-width="2"/>
    <rect x="1585" y="28" width="9" height="8" fill="none" stroke="#6e7379" stroke-width="2"/>
    <path d="M1594.5 22 L1599.5 22 L1599.5 27 Z" fill="#6e7379"/>
    <path d="M1626 20 L1638 33 M1638 20 L1626 33" stroke="#72777d" stroke-width="3"/>
    <!-- flame icons -->
    <path d="M1425.5 15.5 C1431 16 1436 20 1437.5 26 C1438.5 30 1435 33 1432.5 34.5 C1432 31 1429.5 29.5 1427.5 28.5 C1429.5 25 1429 20 1425.5 15.5 Z" fill="#f7a514"/>
    <path d="M1541 15.5 C1543.5 16.5 1544 19.5 1543.5 21 C1545.5 22 1546 24 1544 25.5 C1543 29 1539 32 1535 34 C1537 31 1537.5 28 1537 25.5 C1535.5 24 1535.5 22 1537.5 21 C1537.5 18.5 1539 16.5 1541 15.5 Z" fill="#1cd0f4"/>
  </svg>
  <div class="t" style="left:69px;top:13px;font-size:22px;font-weight:bold;color:#fff;letter-spacing:-0.55px">US T-Bond - Cash</div>
  <div class="t" style="left:1266px;top:13px;font-size:18.5px;font-weight:bold;color:#e4121b;letter-spacing:0.2px;text-shadow:0 0 2px #6a1a20">-0,69%</div>
  <div class="t" style="left:1357px;top:16px;font-size:18px;font-weight:bold;color:#f4f4f4;letter-spacing:-0.2px">148,275</div>
  <div class="t" style="left:1465px;top:16px;font-size:18px;font-weight:bold;color:#f4f4f4;letter-spacing:0.2px">148,305</div>
</div>
<div id="band" class="abs"></div>

<!-- toolbar -->
<div id="tb" class="abs">
  <div class="btn" style="left:0;width:29px"></div>
  <div class="btn blue" style="left:31px;width:31px"></div>
  <div class="btn" style="left:64px;width:132px"><span class="t" style="left:21px;top:8px;font-size:14.5px;letter-spacing:-0.1px">15 Minuten</span></div>
  <div class="btn" style="left:197px;width:29px"></div>
  <div class="btn" style="left:228px;width:128px"><span class="t" style="left:19px;top:6px;font-size:14.5px;letter-spacing:0.6px">6 Tage</span></div>
  <div class="btn" style="left:357px;width:31px"></div>
  <div class="btn" style="left:389px;width:32px"><span class="t" style="left:15px;top:6px;font-weight:bold;font-size:14px">S</span></div>
  <div class="btn" style="left:422px;width:31px"><span class="t" style="left:15px;top:6px;font-weight:bold;font-size:14px">1</span></div>
  <div class="btn" style="left:455px;width:30px"><span class="t" style="left:14px;top:6px;font-weight:bold;font-size:14px">2</span></div>
  <div class="btn" style="left:487px;width:30px"><span class="t" style="left:15px;top:6px;font-weight:bold;font-size:14px">3</span></div>
  <div class="btn" style="left:519px;width:31px"><span class="t" style="left:15px;top:6px;font-weight:bold;font-size:14px">4</span></div>
  <div class="btn" style="left:552px;width:32px"><span class="t" style="left:15px;top:6px;font-weight:bold;font-size:14px">5</span></div>
  <div class="btn" style="left:585px;width:31px"></div>
  <div class="btn" style="left:618px;width:148px"><span class="t" style="left:41px;top:7px;font-size:14.5px;letter-spacing:0px">Chart Forum</span></div>
  <div class="btn" style="left:892px;width:108px;background:linear-gradient(#4d5055 0,#3f4247 45%,#2f3236 100%)"><span class="t" style="left:20px;top:8px;font-size:14.5px;letter-spacing:0.3px">Verwandte</span></div>
  <span class="t" style="left:1005px;top:4px;font-size:14.5px;color:#f0f0f0;letter-spacing:0.1px">Chart-Tools</span>
  <div class="btn navy" style="left:1086px;width:31px"></div>
  <div class="btn" style="left:1118px;width:31px;background:linear-gradient(#46464a,#333336)"></div>
  <div class="btn tblue" style="left:1151px;width:31px"></div>
  <div class="btn navy" style="left:1183px;width:32px"></div>
  <div class="btn bblue" style="left:1216px;width:31px"></div>
  <div class="btn navy" style="left:1249px;width:31px;background:linear-gradient(#0b2f7a 0,#11479f 55%,#1b70d8 100%)"></div>
  <div class="btn bblue" style="left:1281px;width:31px"></div>
  <div class="btn" style="left:1313px;width:32px"></div>
  <div class="btn" style="left:1346px;width:31px"></div>
  <div class="btn" style="left:1378px;width:32px"></div>
  <div class="btn bblue" style="left:1411px;width:32px"></div>
  <svg class="abs" style="left:0;top:0" width="1653" height="31">
    <!-- list icon -->
    <rect x="7.5" y="6.5" width="14" height="18" fill="#1b1e22" stroke="#fff" stroke-width="1.6"/>
    <g fill="#fff"><rect x="10" y="9" width="2" height="1.5"/><rect x="13" y="9" width="6" height="1.5"/>
    <rect x="10" y="12" width="2" height="1.5"/><rect x="13" y="12" width="6" height="1.5"/>
    <rect x="10" y="15" width="2" height="1.5"/><rect x="13" y="15" width="6" height="1.5"/>
    <rect x="10" y="18" width="2" height="1.5"/><rect x="13" y="18" width="6" height="1.5"/>
    <rect x="10" y="21" width="2" height="1.5"/><rect x="13" y="21" width="6" height="1.5"/></g>
    <!-- blue gear -->
    <g transform="translate(46.5,15.5)"><circle r="6" fill="#fff"/><circle r="3.2" fill="#1a86ee"/>
      <g fill="#fff"><rect x="-1.2" y="-8" width="2.4" height="16"/><rect x="-8" y="-1.2" width="16" height="2.4"/>
      <rect x="-1.2" y="-8" width="2.4" height="16" transform="rotate(45)"/><rect x="-1.2" y="-8" width="2.4" height="16" transform="rotate(-45)"/></g>
      <circle r="3.2" fill="#1a86ee"/><rect x="-0.6" y="-2" width="1.2" height="4" fill="#9cd0ff"/><rect x="-2" y="-0.6" width="4" height="1.2" fill="#9cd0ff"/></g>
    <!-- dropdown triangles -->
    <path d="M174.5 12 L187.5 12 L181 19.5 Z" fill="#36aef2" stroke="#123a5a" stroke-width="0.8"/>
    <path d="M335.5 12 L348.5 12 L342 19.5 Z" fill="#36aef2" stroke="#123a5a" stroke-width="0.8"/>
    <!-- lock -->
    <path d="M208 14 L208 10.5 C208 6.5 214 6.5 214 10.5 L214 14" fill="none" stroke="#8fdcf5" stroke-width="2.2"/>
    <rect x="206" y="15" width="10.5" height="6.5" fill="#45c2f4"/>
    <!-- calendar -->
    <rect x="364.5" y="9" width="17" height="15" fill="none" stroke="#fff" stroke-width="1.6"/>
    <rect x="364.5" y="9" width="17" height="3.5" fill="#fff"/>
    <rect x="367" y="6" width="2" height="5" fill="#fff"/><rect x="372" y="6" width="2" height="5" fill="#fff"/><rect x="377" y="6" width="2" height="5" fill="#fff"/>
    <g fill="#fff"><rect x="367" y="14.5" width="3" height="3"/><rect x="371.5" y="14.5" width="3" height="3"/><rect x="376" y="14.5" width="3" height="3"/>
    <rect x="367" y="19" width="3" height="3"/><rect x="371.5" y="19" width="3" height="3"/><rect x="376" y="19" width="3" height="3"/></g>
    <!-- gear -->
    <g transform="translate(600.5,16)"><circle r="6" fill="#fff"/>
      <g fill="#fff"><rect x="-1.2" y="-8" width="2.4" height="16"/><rect x="-8" y="-1.2" width="16" height="2.4"/>
      <rect x="-1.2" y="-8" width="2.4" height="16" transform="rotate(45)"/><rect x="-1.2" y="-8" width="2.4" height="16" transform="rotate(-45)"/></g>
      <circle r="3.3" fill="#33363b"/></g>
    <!-- chat bubble -->
    <path d="M627.5 7.5 L643.5 7.5 L643.5 18.5 L633 18.5 L630 22.5 L630 18.5 L627.5 18.5 Z" fill="#8c9095" stroke="#d8d8d8" stroke-width="1.2"/>
    <!-- back -->
    <path d="M1093 16 L1098.5 10.5 L1098.5 13.5 L1104 13.5 L1104 18.5 L1098.5 18.5 L1098.5 21.5 Z" fill="#fff"/>
    <path d="M1110 9 L1110 24 L1093 24" fill="none" stroke="#d0e4ff" stroke-width="1"/>
    <!-- % -->
    <text x="1125" y="23" font-family="Liberation Sans" font-weight="bold" font-size="17" fill="#fff">%</text>
    <!-- Tt -->
    <text x="1156" y="23" font-family="Liberation Serif" font-size="21" fill="#fff">T</text>
    <text x="1170" y="24" font-family="Liberation Serif" font-size="13" fill="#fff">T</text>
    <!-- # grid -->
    <g fill="#fff"><rect x="1194.5" y="6" width="2" height="19"/><rect x="1201.5" y="6" width="2" height="19"/>
    <rect x="1189" y="11.5" width="20" height="2"/><rect x="1189" y="17.5" width="20" height="2"/></g>
    <!-- grid pen -->
    <g fill="#9ad6ff"><rect x="1227.5" y="6" width="1.2" height="20"/><rect x="1233.5" y="6" width="1.2" height="20"/>
    <rect x="1221" y="12" width="21" height="1.2"/><rect x="1221" y="18" width="21" height="1.2"/></g>
    <path d="M1229 27.5 L1239 18 L1242 21 L1232 29.5 Z" fill="#fff"/><circle cx="1241.5" cy="18" r="2.6" fill="#fff"/>
    <!-- candle icon -->
    <rect x="1263.5" y="6" width="2" height="20" fill="#fff"/>
    <rect x="1261" y="11" width="7" height="10" fill="#fff"/><rect x="1263" y="13" width="3" height="6" fill="#1446a0"/>
    <!-- windows -->
    <rect x="1286.5" y="17.5" width="12" height="8" fill="none" stroke="#fff" stroke-width="1.4"/>
    <path d="M1292 15 L1292 12 L1303 12 L1303 20" fill="none" stroke="#fff" stroke-width="2.4"/>
    <path d="M1297 10 L1297 7 L1308 7 L1308 15" fill="none" stroke="#fff" stroke-width="2.4"/>
    <!-- candles line -->
    <path d="M1318 19.5 L1340 8.5" stroke="#fff" stroke-width="1.4"/>
    <g fill="#fff"><rect x="1325.2" y="8" width="1.6" height="20"/><rect x="1332.7" y="5" width="1.6" height="20"/></g>
    <rect x="1323.5" y="12" width="5" height="10" fill="#3a3d43" stroke="#fff" stroke-width="1.5"/>
    <rect x="1331" y="9" width="5" height="10" fill="#3a3d43" stroke="#fff" stroke-width="1.5"/>
    <!-- tag -->
    <path d="M1352 16 L1357 10 L1372 10 L1372 22 L1357 22 Z" fill="none" stroke="#fff" stroke-width="2"/>
    <!-- print -->
    <rect x="1386" y="7" width="15" height="4" fill="#fff"/>
    <rect x="1384" y="12" width="19" height="7" fill="#fff"/>
    <rect x="1387" y="20" width="13" height="5" fill="#fff"/>
    <!-- gear pen -->
    <g transform="translate(1420,9.5)"><circle r="5.2" fill="#d8ecff"/>
      <g fill="#d8ecff"><rect x="-1.3" y="-7" width="2.6" height="14"/><rect x="-7" y="-1.3" width="14" height="2.6"/>
      <rect x="-1.3" y="-7" width="2.6" height="14" transform="rotate(45)"/><rect x="-1.3" y="-7" width="2.6" height="14" transform="rotate(-45)"/></g>
      <circle r="2.6" fill="#1a8ef0"/></g>
    <path d="M1425 24.5 L1434 15.5 L1437.5 19 L1428.5 27 L1424.5 28 Z" fill="#fff"/><circle cx="1436" cy="17" r="2.6" fill="#fff"/>
  </svg>
</div>

<!-- bottom bar -->
<div id="bot" class="abs">
  <div class="ib" style="left:347px"></div>
  <div class="ib" style="left:376px"></div>
  <div class="ib ibb" style="left:406px"></div>
  <div class="ib ibb" style="left:435px"></div>
  <div id="tabs">
    <span class="tab" style="left:26px;letter-spacing:0.15px">Zeitraum</span>
    <div class="tsep" style="left:117px"></div>
    <span class="tab" style="left:139px;letter-spacing:0.35px">Chart Typ</span>
    <div class="tsep" style="left:235px"></div>
    <span class="tab" style="left:254px;letter-spacing:0.35px">Indikatoren</span>
    <div class="tsep" style="left:361px"></div>
    <span class="tab" style="left:380px;letter-spacing:0.18px">Zeichenwerkzeuge</span>
    <div class="tsep" style="left:542px"></div>
    <span class="tab" style="left:576px;letter-spacing:0.3px">Muster</span>
  </div>
  <div class="ib" style="left:1141px"></div>
  <div class="ib" style="left:1170px"></div>
  <div class="ib" style="left:1200px"></div>
  <div class="ib" style="left:1229px"></div>
  <div class="ib ibb" style="left:1259px;width:24px"></div>
  <svg class="abs" style="left:0;top:0" width="1653" height="31">
    <!-- refresh -->
    <path d="M353 12 A6 6 0 0 1 364 13" fill="none" stroke="#fff" stroke-width="2.6"/>
    <path d="M364 19 A6 6 0 0 1 353 18" fill="none" stroke="#fff" stroke-width="2.6"/>
    <path d="M361 10 L366 10 L366 15 Z" fill="#fff"/><path d="M356 21 L351 21 L351 16 Z" fill="#fff"/>
    <!-- cancel -->
    <circle cx="387.5" cy="15.5" r="6.5" fill="none" stroke="#fff" stroke-width="2.4"/>
    <path d="M383 20 L392 11" stroke="#fff" stroke-width="2.4"/>
    <!-- pen -->
    <path d="M411 22 L423 10 L426 13 L414 25 L410 26 Z" fill="#fff"/>
    <!-- up/down -->
    <path d="M441 13 L447 7 L453 13 Z" fill="#fff"/><path d="M441 18 L453 18 L447 24 Z" fill="#fff"/>
    <!-- zoom -->
    <circle cx="1150" cy="13" r="4.8" fill="none" stroke="#fff" stroke-width="2"/>
    <path d="M1153.5 16.5 L1159 22" stroke="#fff" stroke-width="2.6"/>
    <!-- minus / plus -->
    <rect x="1176" y="14" width="12" height="3" fill="#fff"/>
    <rect x="1205" y="14" width="13" height="3" fill="#fff"/><rect x="1210" y="9" width="3" height="13" fill="#fff"/>
    <!-- crosshair -->
    <g fill="#fff"><rect x="1240" y="4" width="1.6" height="7"/><rect x="1240" y="20" width="1.6" height="7"/>
    <rect x="1231" y="15" width="7" height="1.6"/><rect x="1244" y="15" width="7" height="1.6"/><rect x="1240" y="15" width="1.6" height="1.6"/></g>
    <!-- 1234 -->
    <text x="1262" y="17" font-family="Liberation Sans" font-weight="bold" font-size="9" fill="#fff" letter-spacing="-0.6">1234</text>
    <rect x="1261" y="20" width="20" height="1.2" fill="#fff"/>
  </svg>
</div>
</body></html>
